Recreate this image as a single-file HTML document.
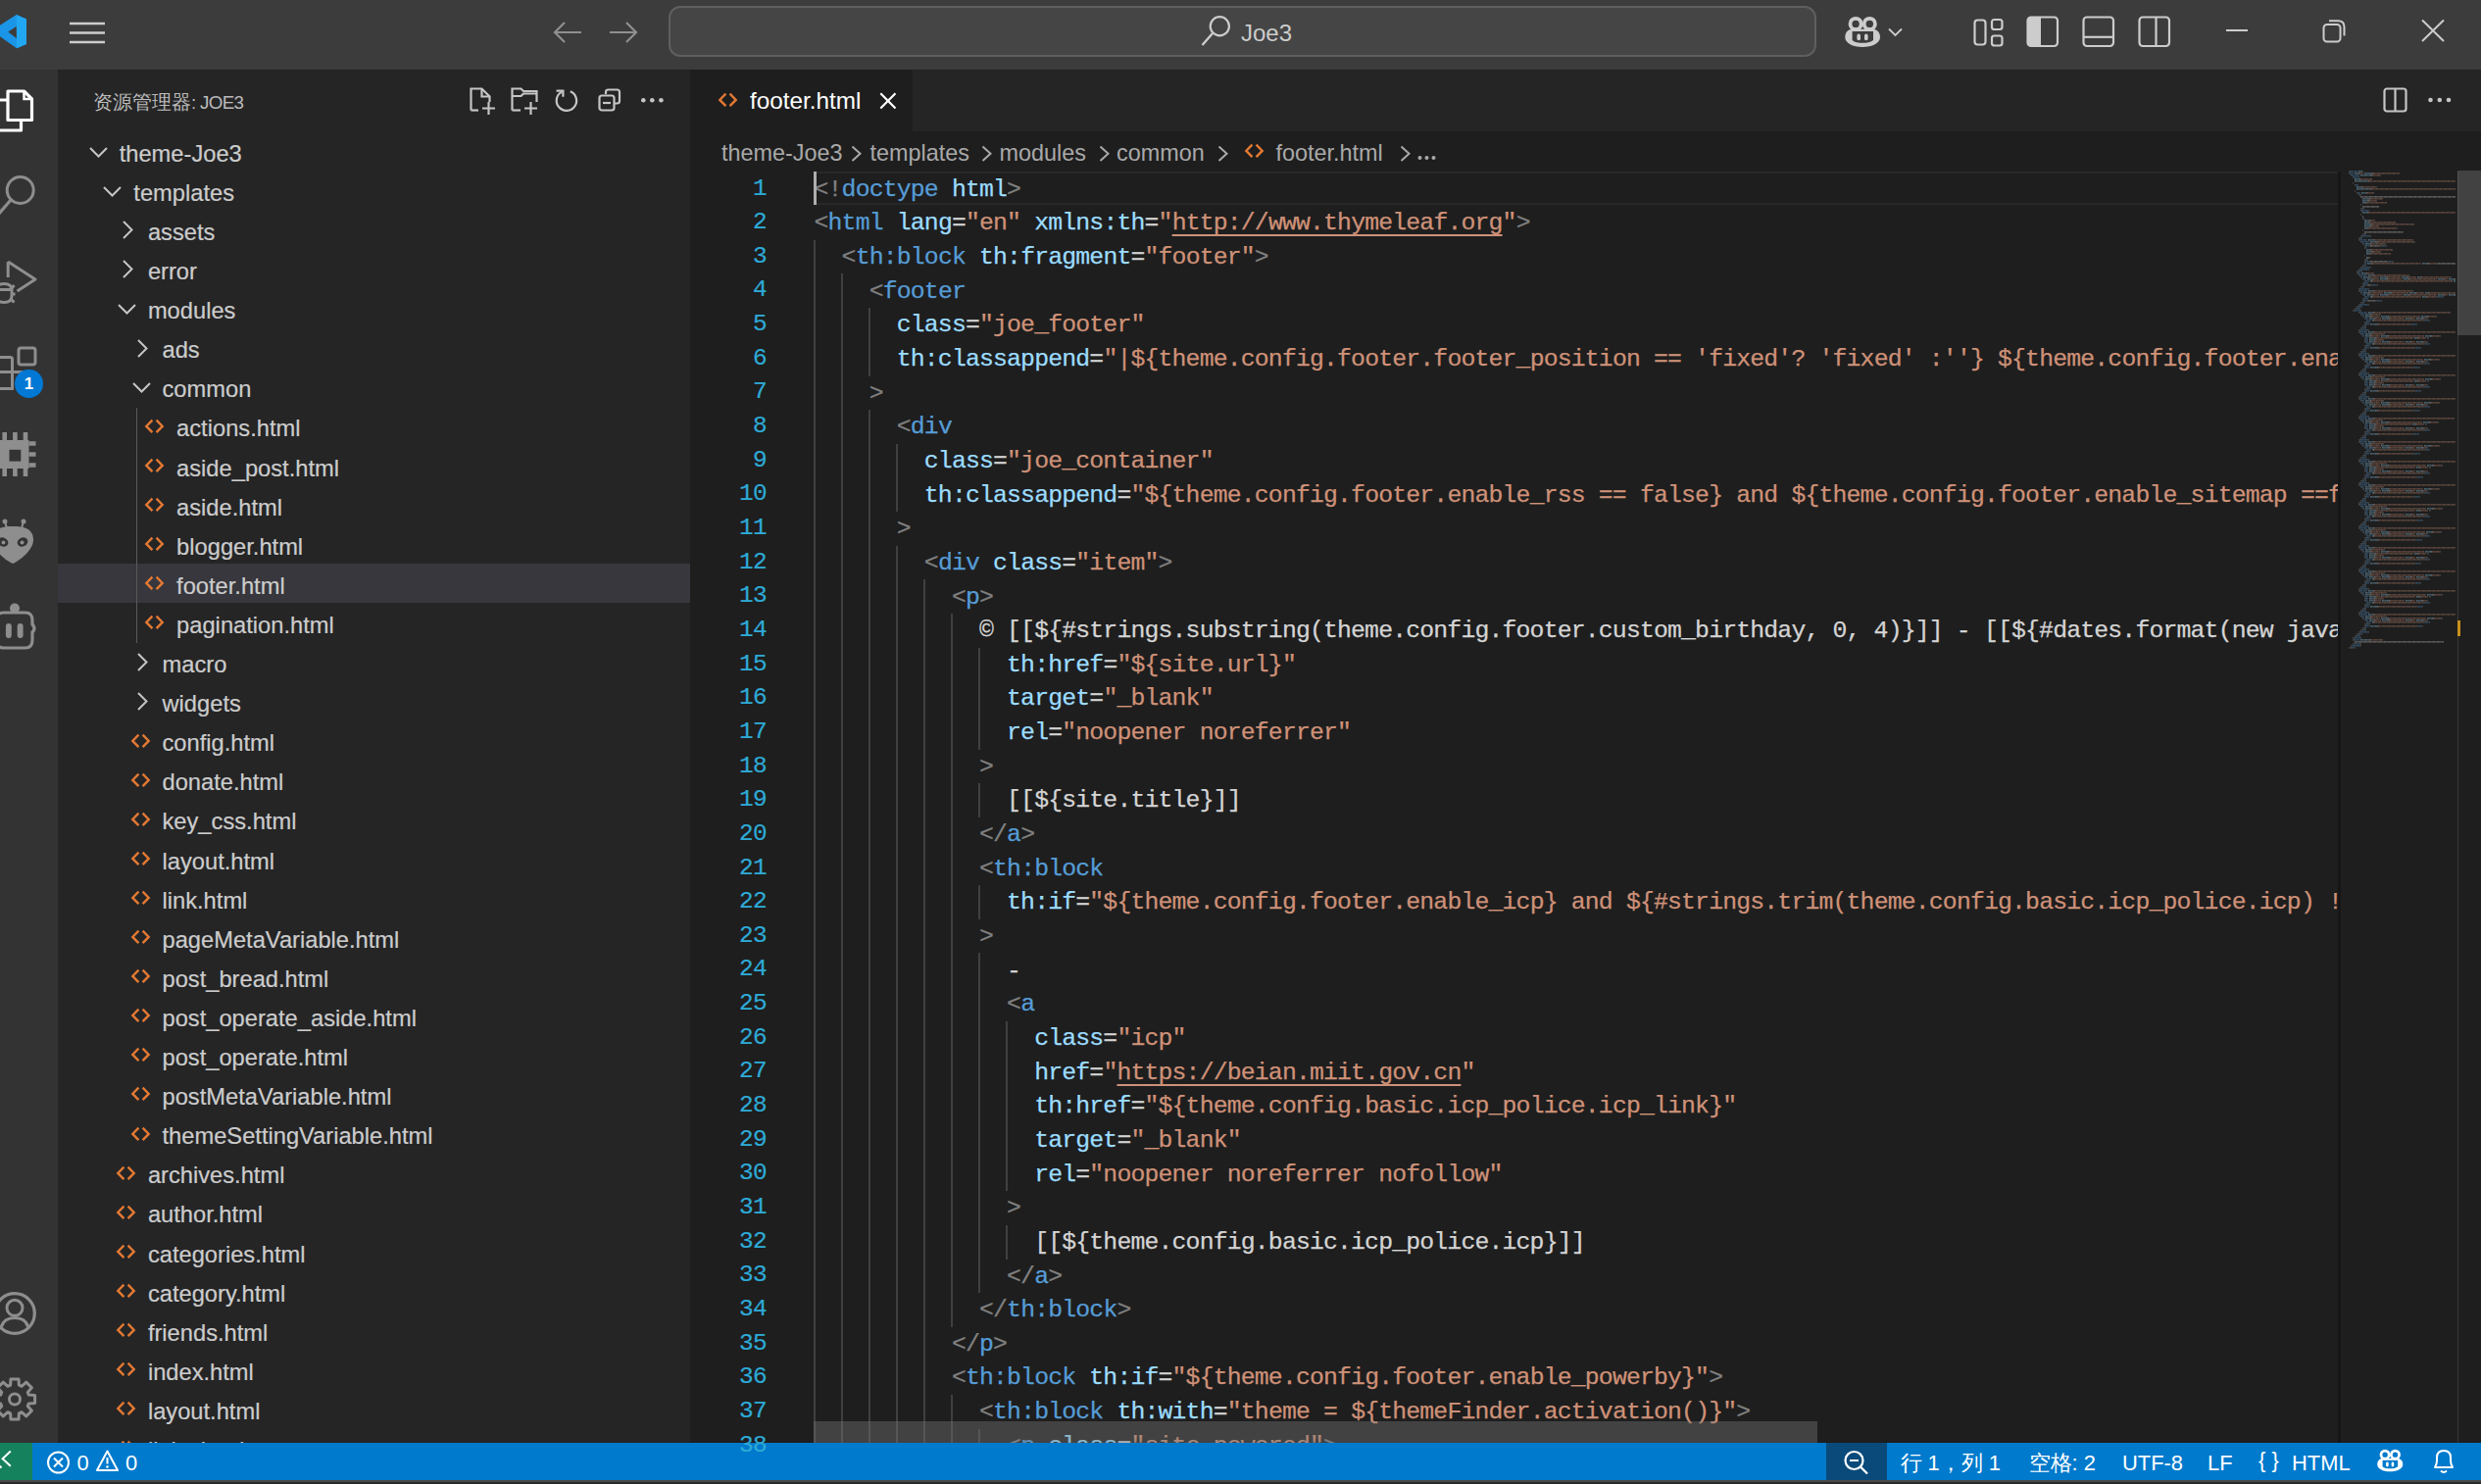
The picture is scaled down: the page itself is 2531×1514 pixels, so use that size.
<!DOCTYPE html><html><head><meta charset="utf-8"><style>*{box-sizing:border-box;margin:0;padding:0}
html,body{width:2531px;height:1514px;overflow:hidden;background:#1e1e1e;font-family:"Liberation Sans",sans-serif}
.a{position:absolute}
.t{position:absolute;white-space:pre;line-height:1}
.code{position:absolute;left:-0.5px;white-space:pre;font-family:"Liberation Mono",monospace;font-size:24.8px;letter-spacing:-0.84px;line-height:34.65px;height:34.65px;-webkit-text-stroke:0.25px currentColor}
.ln{position:absolute;font-family:"Liberation Mono",monospace;font-size:24.4px;letter-spacing:-0.6px;-webkit-text-stroke:0.2px currentColor;line-height:34.65px;color:#2eaad6;text-align:right;width:120px;left:662px}
.row{position:absolute;left:59px;width:645px;height:40.1px}
.rt{position:absolute;top:0;line-height:40.1px;font-size:23.7px;color:#cccccc;white-space:pre;-webkit-text-stroke:0.2px currentColor}
.ig{position:absolute;width:2px;background:#404040}
svg{position:absolute;overflow:visible}
</style></head><body>
<div class="a" style="left:0;top:0;width:2531px;height:71px;background:#3c3c3c"></div>
<div class="a" style="left:0;top:71px;width:59px;height:1401px;background:#333333"></div>
<div class="a" style="left:59px;top:71px;width:645px;height:1401px;background:#252526"></div>
<div class="a" style="left:704px;top:71px;width:1827px;height:63px;background:#252526"></div>
<div class="a" style="left:704px;top:71px;width:227px;height:63px;background:#1e1e1e"></div>
<div class="a" style="left:0;top:1472px;width:2531px;height:38px;background:#007acc"></div>
<div class="a" style="left:0;top:1510px;width:2531px;height:4px;background:#2a2a2a;border-top:2px solid #4a4a4a"></div>
<svg style="left:0px;top:0px" width="30" height="60" viewBox="0 0 30 60"><path fill-rule="evenodd" d="M16.7 15 L27 19.5 L27 45 L17 49.3 L0 37.3 L0 25.8 Z M17.4 26.5 L8.2 32.4 L17.4 39.5 Z" fill="#1b95e8"/><path d="M16.7 15 L27 19.5 L27 45 L17 49.3 Z" fill="#22a7f2"/></svg>
<svg style="left:71px;top:22px" width="37" height="24" viewBox="0 0 37 24"><path d="M0 2 H36 M0 11.5 H36 M0 21 H36" stroke="#cccccc" stroke-width="2.6"/></svg>
<svg style="left:563px;top:21px" width="32" height="24" viewBox="0 0 32 24"><path d="M30 12 H3 M13 2 L3 12 L13 22" fill="none" stroke="#8f8f8f" stroke-width="2.2"/></svg>
<svg style="left:621px;top:21px" width="32" height="24" viewBox="0 0 32 24"><path d="M1 12 H28 M18 2 L28 12 L18 22" fill="none" stroke="#8f8f8f" stroke-width="2.2"/></svg>
<div class="a" style="left:682px;top:6px;width:1171px;height:52px;background:#454545;border:2px solid #5f5f5f;border-radius:12px"></div>
<svg style="left:1224px;top:14px" width="34" height="36" viewBox="0 0 34 36"><circle cx="20.3" cy="12.8" r="9.6" fill="none" stroke="#cccccc" stroke-width="2.2"/><path d="M13 20 L2.5 32" stroke="#cccccc" stroke-width="2.4"/></svg>
<div class="t" style="left:1266px;top:22px;font-size:24px;color:#cccccc">Joe3</div>
<svg style="left:1882px;top:16px" width="38" height="34" viewBox="0 0 38 34"><g transform="scale(1.0)"><path d="M0.3 22 C0.3 16 4 13.7 8 13.7 H28 C32 13.7 36 16 36 22 C36 28 28 32 18 32 C8 32 0.3 28 0.3 22 Z" fill="#cccccc"/><path d="M7.6 16.1 H29 V25 C26 27.6 22 27.8 18.3 27.8 C14 27.8 10 27.4 7.6 25 Z" fill="#3c3c3c"/><circle cx="11.1" cy="8.4" r="5.6" fill="#3c3c3c" stroke="#cccccc" stroke-width="3.8"/><circle cx="25.3" cy="8.4" r="5.6" fill="#3c3c3c" stroke="#cccccc" stroke-width="3.8"/><rect x="12.4" y="18.6" width="3.6" height="6.6" rx="1.8" fill="#cccccc"/><rect x="20" y="18.6" width="3.6" height="6.6" rx="1.8" fill="#cccccc"/></g></svg>
<svg style="left:1926px;top:28px" width="16" height="10" viewBox="0 0 16 10"><path d="M1 1.5 L7.5 8 L14 1.5" fill="none" stroke="#cccccc" stroke-width="1.8"/></svg>
<svg style="left:2012px;top:18px" width="33" height="30" viewBox="0 0 33 30"><rect x="2.5" y="2.5" width="11" height="25" rx="3" fill="none" stroke="#cccccc" stroke-width="2.2"/><rect x="20" y="2" width="10.5" height="10" rx="2.5" fill="none" stroke="#cccccc" stroke-width="2.2"/><rect x="20" y="18.5" width="10.5" height="10" rx="2.5" fill="none" stroke="#cccccc" stroke-width="2.2"/></svg>
<svg style="left:2067px;top:16px" width="34" height="33" viewBox="0 0 34 33"><rect x="1.5" y="1.5" width="30.5" height="29.5" rx="3.5" fill="none" stroke="#cccccc" stroke-width="2.2"/><path d="M1.5 5 Q1.5 1.5 5 1.5 H15 V31 H5 Q1.5 31 1.5 27.5 Z" fill="#cccccc"/></svg>
<svg style="left:2124px;top:16px" width="34" height="33" viewBox="0 0 34 33"><rect x="1.5" y="1.5" width="30.5" height="29.5" rx="3.5" fill="none" stroke="#cccccc" stroke-width="2.2"/><path d="M1.5 21.8 H32" stroke="#cccccc" stroke-width="2.2"/></svg>
<svg style="left:2181px;top:16px" width="34" height="33" viewBox="0 0 34 33"><rect x="1.5" y="1.5" width="30.5" height="29.5" rx="3.5" fill="none" stroke="#cccccc" stroke-width="2.2"/><path d="M18.5 1.5 V31" stroke="#cccccc" stroke-width="2.2"/></svg>
<svg style="left:2270px;top:29px" width="25" height="4" viewBox="0 0 25 4"><path d="M1 2 H23" stroke="#cccccc" stroke-width="2"/></svg>
<svg style="left:2368px;top:19px" width="27" height="26" viewBox="0 0 27 26"><rect x="2.5" y="6" width="17" height="17.5" rx="3.5" fill="none" stroke="#cccccc" stroke-width="2"/><path d="M8 2.2 H17 Q23.5 2.2 23.5 8.5 V17.5" fill="none" stroke="#cccccc" stroke-width="2"/></svg>
<svg style="left:2469px;top:19px" width="27" height="25" viewBox="0 0 27 25"><path d="M2 1.5 L24 23 M24 1.5 L2 23" stroke="#cccccc" stroke-width="2"/></svg>
<svg style="left:0px;top:88px" width="40" height="50" viewBox="0 0 40 50"><path d="M8 5 H24.5 L32.5 13 V34.5 H8 Z" fill="none" stroke="#ffffff" stroke-width="3.2" stroke-linejoin="round"/><path d="M24.5 5 V13 H32.5" fill="none" stroke="#ffffff" stroke-width="2.5"/><path d="M8 14 H-4 V45 H21.5 V34.5" fill="none" stroke="#ffffff" stroke-width="3.2" stroke-linejoin="round"/></svg>
<svg style="left:0px;top:176px" width="40" height="50" viewBox="0 0 40 50"><circle cx="20.7" cy="18" r="13.5" fill="none" stroke="#8e8e8e" stroke-width="3"/><path d="M11 28 L-2 43" stroke="#8e8e8e" stroke-width="3.2"/></svg>
<svg style="left:0px;top:262px" width="40" height="52" viewBox="0 0 40 52"><path d="M8.2 5 L36 23 L17.5 35" fill="none" stroke="#8e8e8e" stroke-width="3" stroke-linejoin="round"/><path d="M8.2 5 V21" stroke="#8e8e8e" stroke-width="3"/><path d="M-4 34 Q-4 27.5 4 27.5 Q12 27.5 12 34 V40 Q12 46.5 4 46.5 Q-4 46.5 -4 40 Z" fill="none" stroke="#8e8e8e" stroke-width="3"/><path d="M-4 33.5 H12 M12 32 L14.5 29 M12 38 H15.5 M11.5 43.5 L14.5 46.5" stroke="#8e8e8e" stroke-width="3"/></svg>
<svg style="left:0px;top:352px" width="40" height="50" viewBox="0 0 40 50"><rect x="19" y="3" width="17" height="17" rx="2.5" fill="none" stroke="#8e8e8e" stroke-width="3"/><path d="M-5 12.5 H10.5 Q12.5 12.5 12.5 14.5 V44.5 H-5 M-5 27.5 H28" fill="none" stroke="#8e8e8e" stroke-width="3"/></svg>
<div class="a" style="left:15.3px;top:377.2px;width:28.4px;height:28.4px;border-radius:50%;background:#0078d4;border:0"></div>
<div class="t" style="left:15.3px;top:383px;width:28.4px;text-align:center;font-size:17px;font-weight:bold;color:#ffffff">1</div>
<svg style="left:0px;top:440px" width="40" height="48" viewBox="0 0 40 48"><path d="M-8 9 H29.5 V38 H-8 Z" fill="#8e8e8e"/><rect x="9.5" y="18.8" width="11.8" height="11.8" fill="#333333"/><path d="M4.7 1 V9 M15.4 1 V9 M26 1 V9 M4.7 38 V46 M15.4 38 V46 M26 38 V46 M29.5 12.5 H36.5 M29.5 23.5 H36.5 M29.5 34.5 H36.5" stroke="#8e8e8e" stroke-width="4.6"/></svg>
<svg style="left:0px;top:529px" width="40" height="48" viewBox="0 0 40 48"><path d="M-8 22 C-8 10 2 8 13 8 C24 8 34 10 34 22 C34 31 22 42 13 46 C4 42 -8 31 -8 22 Z" fill="#8e8e8e"/><ellipse cx="3" cy="24" rx="5.5" ry="4.5" fill="#333333" transform="rotate(25 3 24)"/><ellipse cx="23" cy="24" rx="5.5" ry="4.5" fill="#333333" transform="rotate(-25 23 24)"/><circle cx="3.5" cy="24.5" r="2" fill="#8e8e8e"/><circle cx="22.5" cy="24.5" r="2" fill="#8e8e8e"/><path d="M5 3 L7 10 M24 3 L22 10" stroke="#8e8e8e" stroke-width="2"/><circle cx="5" cy="3" r="2.5" fill="#8e8e8e"/><circle cx="24" cy="3" r="2.5" fill="#8e8e8e"/></svg>
<svg style="left:0px;top:615px" width="40" height="50" viewBox="0 0 40 50"><circle cx="15" cy="5.5" r="5" fill="#8e8e8e"/><path d="M-4 18 Q-4 10 4 10 H26 Q33 10 33 18 V22 Q37 26 33 30 V38 Q33 46 26 46 H4 Q-4 46 -4 38 Z" fill="none" stroke="#8e8e8e" stroke-width="3.2"/><rect x="5.9" y="21" width="5.9" height="15" rx="2.9" fill="#8e8e8e"/><rect x="17.7" y="21" width="5.9" height="15" rx="2.9" fill="#8e8e8e"/></svg>
<svg style="left:0px;top:1316px" width="40" height="48" viewBox="0 0 40 48"><circle cx="15" cy="24" r="20.3" fill="none" stroke="#8e8e8e" stroke-width="3.2"/><circle cx="15" cy="18.3" r="8" fill="none" stroke="#8e8e8e" stroke-width="3"/><path d="M1.5 37.5 Q4 28.5 15 28.5 Q26 28.5 28.5 37.5" fill="none" stroke="#8e8e8e" stroke-width="3"/></svg>
<svg style="left:0px;top:1404px" width="40" height="48" viewBox="0 0 40 48"><path d="M35.61 19.49 L35.61 27.51 L29.34 27.89 L28.24 30.54 L32.41 35.24 L26.74 40.91 L22.04 36.74 L19.39 37.84 L19.01 44.11 L10.99 44.11 L10.61 37.84 L7.96 36.74 L3.26 40.91 L-2.41 35.24 L1.76 30.54 L0.66 27.89 L-5.61 27.51 L-5.61 19.49 L0.66 19.11 L1.76 16.46 L-2.41 11.76 L3.26 6.09 L7.96 10.26 L10.61 9.16 L10.99 2.89 L19.01 2.89 L19.39 9.16 L22.04 10.26 L26.74 6.09 L32.41 11.76 L28.24 16.46 L29.34 19.11 Z" fill="none" stroke="#8e8e8e" stroke-width="3" stroke-linejoin="round"/><circle cx="15" cy="23.5" r="5.5" fill="none" stroke="#8e8e8e" stroke-width="3"/></svg>
<svg style="left:476px;top:88px" width="34" height="32" viewBox="0 0 34 32"><path d="M4.5 24.5 V2.5 H15.5 L23.5 10.5 V16" fill="none" stroke="#c5c5c5" stroke-width="2.2"/><path d="M15.5 2.5 V10.5 H23.5" fill="none" stroke="#c5c5c5" stroke-width="2.2"/><path d="M4.5 24.5 H12" stroke="#c5c5c5" stroke-width="2.2"/><path d="M22.5 16 V29 M16 22.5 H29" stroke="#c5c5c5" stroke-width="2.2"/></svg>
<svg style="left:519px;top:88px" width="34" height="32" viewBox="0 0 34 32"><path d="M3.5 24.5 V2.5 H12.5 L15 5 H28.5 V16" fill="none" stroke="#c5c5c5" stroke-width="2.2"/><path d="M3.5 10 H12.5 L15 7.5 H28.5" fill="none" stroke="#c5c5c5" stroke-width="2.2"/><path d="M3.5 24.5 H12" stroke="#c5c5c5" stroke-width="2.2"/><path d="M22.5 16 V29 M16 22.5 H29" stroke="#c5c5c5" stroke-width="2.2"/></svg>
<svg style="left:564px;top:88px" width="30" height="30" viewBox="0 0 30 30"><path d="M9.2 5.6 A10.2 10.2 0 1 0 17.8 5.2" fill="none" stroke="#c5c5c5" stroke-width="2.2"/><path d="M3.6 4.6 H10.4 V10.8" fill="none" stroke="#c5c5c5" stroke-width="2.2"/></svg>
<svg style="left:608px;top:88px" width="30" height="30" viewBox="0 0 30 30"><path d="M10 8 V6 Q10 3.5 12.5 3.5 H21.5 Q24 3.5 24 6 V15 Q24 17.5 21.5 17.5 H19" fill="none" stroke="#c5c5c5" stroke-width="2.2"/><rect x="3.5" y="9.5" width="15" height="15" rx="2.5" fill="none" stroke="#c5c5c5" stroke-width="2.2"/><path d="M7 17 H15" stroke="#c5c5c5" stroke-width="2.2"/></svg>
<svg style="left:652px;top:98px" width="26" height="8" viewBox="0 0 26 8"><circle cx="4.3" cy="4.2" r="2.3" fill="#c5c5c5"/><circle cx="13.3" cy="4.2" r="2.3" fill="#c5c5c5"/><circle cx="22.4" cy="4.2" r="2.3" fill="#c5c5c5"/></svg>
<svg style="left:731.5px;top:93.5px" width="20" height="15"><path d="M8.4 1.7 L2.3 7.9 L8.4 14.2 M12.6 1.7 L18.7 7.9 L12.6 14.2" fill="none" stroke="#e37933" stroke-width="2.4"/></svg>
<div class="t" style="left:765px;top:91px;font-size:24.3px;color:#ffffff">footer.html</div>
<svg style="left:896.5px;top:93.5px" width="19" height="19" viewBox="0 0 19 19"><path d="M1.3 1.3 L16.5 16.5 M16.5 1.3 L1.3 16.5" stroke="#ffffff" stroke-width="2.2"/></svg>
<svg style="left:2430px;top:88px" width="28" height="28" viewBox="0 0 28 28"><rect x="2.5" y="2.5" width="22" height="23" rx="2.5" fill="none" stroke="#c5c5c5" stroke-width="2.2"/><path d="M13.5 2.5 V25.5" stroke="#c5c5c5" stroke-width="2.2"/></svg>
<svg style="left:2476px;top:98px" width="28" height="8" viewBox="0 0 28 8"><circle cx="3.5" cy="4" r="2.3" fill="#c5c5c5"/><circle cx="12.8" cy="4" r="2.3" fill="#c5c5c5"/><circle cx="22" cy="4" r="2.3" fill="#c5c5c5"/></svg>
<div class="t" style="left:736px;top:145px;font-size:23.4px;color:#a9a9a9">theme-Joe3</div>
<div class="t" style="left:887.5px;top:145px;font-size:23.4px;color:#a9a9a9">templates</div>
<div class="t" style="left:1019.5px;top:145px;font-size:23.4px;color:#a9a9a9">modules</div>
<div class="t" style="left:1139px;top:145px;font-size:23.4px;color:#a9a9a9">common</div>
<div class="t" style="left:1301.5px;top:145px;font-size:23.4px;color:#a9a9a9">footer.html</div>
<svg style="left:868px;top:147.5px" width="12" height="18" viewBox="0 0 12 18"><path d="M1.5 1.5 L9.5 8.7 L1.5 15.9" fill="none" stroke="#a9a9a9" stroke-width="2"/></svg>
<svg style="left:1001px;top:147.5px" width="12" height="18" viewBox="0 0 12 18"><path d="M1.5 1.5 L9.5 8.7 L1.5 15.9" fill="none" stroke="#a9a9a9" stroke-width="2"/></svg>
<svg style="left:1120.5px;top:147.5px" width="12" height="18" viewBox="0 0 12 18"><path d="M1.5 1.5 L9.5 8.7 L1.5 15.9" fill="none" stroke="#a9a9a9" stroke-width="2"/></svg>
<svg style="left:1241.5px;top:147.5px" width="12" height="18" viewBox="0 0 12 18"><path d="M1.5 1.5 L9.5 8.7 L1.5 15.9" fill="none" stroke="#a9a9a9" stroke-width="2"/></svg>
<svg style="left:1428px;top:147.5px" width="12" height="18" viewBox="0 0 12 18"><path d="M1.5 1.5 L9.5 8.7 L1.5 15.9" fill="none" stroke="#a9a9a9" stroke-width="2"/></svg>
<svg style="left:1269.0px;top:146.0px" width="20" height="15"><path d="M8.4 1.7 L2.3 7.9 L8.4 14.2 M12.6 1.7 L18.7 7.9 L12.6 14.2" fill="none" stroke="#e37933" stroke-width="2.4"/></svg>
<svg style="left:1446px;top:158px" width="20" height="6" viewBox="0 0 20 6"><circle cx="2.5" cy="3" r="2" fill="#a9a9a9"/><circle cx="9.5" cy="3" r="2" fill="#a9a9a9"/><circle cx="16.5" cy="3" r="2" fill="#a9a9a9"/></svg>
<div class="a" style="left:59px;top:134px;width:645px;height:1338px;overflow:hidden">
<div class="a" style="left:0;top:0.00px;width:645px;height:40.1px;">
<svg style="left:31.7px;top:15.5px" width="19" height="10"><path d="M1 1 L9.5 9.5 L18 1" fill="none" stroke="#c5c5c5" stroke-width="2"/></svg>
<div class="rt" style="left:62.7px;top:2.8px">theme-Joe3</div>
</div>
<div class="a" style="left:0;top:40.10px;width:645px;height:40.1px;">
<svg style="left:46.3px;top:15.5px" width="19" height="10"><path d="M1 1 L9.5 9.5 L18 1" fill="none" stroke="#c5c5c5" stroke-width="2"/></svg>
<div class="rt" style="left:77.3px;top:2.8px">templates</div>
</div>
<div class="a" style="left:0;top:80.20px;width:645px;height:40.1px;">
<svg style="left:66.4px;top:11px" width="10" height="19"><path d="M1 1 L9.5 9.5 L1 18" fill="none" stroke="#c5c5c5" stroke-width="2"/></svg>
<div class="rt" style="left:91.9px;top:2.8px">assets</div>
</div>
<div class="a" style="left:0;top:120.30px;width:645px;height:40.1px;">
<svg style="left:66.4px;top:11px" width="10" height="19"><path d="M1 1 L9.5 9.5 L1 18" fill="none" stroke="#c5c5c5" stroke-width="2"/></svg>
<div class="rt" style="left:91.9px;top:2.8px">error</div>
</div>
<div class="a" style="left:0;top:160.40px;width:645px;height:40.1px;">
<svg style="left:60.9px;top:15.5px" width="19" height="10"><path d="M1 1 L9.5 9.5 L18 1" fill="none" stroke="#c5c5c5" stroke-width="2"/></svg>
<div class="rt" style="left:91.9px;top:2.8px">modules</div>
</div>
<div class="a" style="left:0;top:200.50px;width:645px;height:40.1px;">
<svg style="left:81.0px;top:11px" width="10" height="19"><path d="M1 1 L9.5 9.5 L1 18" fill="none" stroke="#c5c5c5" stroke-width="2"/></svg>
<div class="rt" style="left:106.5px;top:2.8px">ads</div>
</div>
<div class="a" style="left:0;top:240.60px;width:645px;height:40.1px;">
<svg style="left:75.5px;top:15.5px" width="19" height="10"><path d="M1 1 L9.5 9.5 L18 1" fill="none" stroke="#c5c5c5" stroke-width="2"/></svg>
<div class="rt" style="left:106.5px;top:2.8px">common</div>
</div>
<div class="a" style="left:0;top:280.70px;width:645px;height:40.1px;">
<svg style="left:88.1px;top:12.0px" width="20" height="15"><path d="M8.4 1.7 L2.3 7.9 L8.4 14.2 M12.6 1.7 L18.7 7.9 L12.6 14.2" fill="none" stroke="#e37933" stroke-width="2.4"/></svg>
<div class="rt" style="left:121.1px;top:2.8px">actions.html</div>
</div>
<div class="a" style="left:0;top:320.80px;width:645px;height:40.1px;">
<svg style="left:88.1px;top:12.0px" width="20" height="15"><path d="M8.4 1.7 L2.3 7.9 L8.4 14.2 M12.6 1.7 L18.7 7.9 L12.6 14.2" fill="none" stroke="#e37933" stroke-width="2.4"/></svg>
<div class="rt" style="left:121.1px;top:2.8px">aside_post.html</div>
</div>
<div class="a" style="left:0;top:360.90px;width:645px;height:40.1px;">
<svg style="left:88.1px;top:12.0px" width="20" height="15"><path d="M8.4 1.7 L2.3 7.9 L8.4 14.2 M12.6 1.7 L18.7 7.9 L12.6 14.2" fill="none" stroke="#e37933" stroke-width="2.4"/></svg>
<div class="rt" style="left:121.1px;top:2.8px">aside.html</div>
</div>
<div class="a" style="left:0;top:401.00px;width:645px;height:40.1px;">
<svg style="left:88.1px;top:12.0px" width="20" height="15"><path d="M8.4 1.7 L2.3 7.9 L8.4 14.2 M12.6 1.7 L18.7 7.9 L12.6 14.2" fill="none" stroke="#e37933" stroke-width="2.4"/></svg>
<div class="rt" style="left:121.1px;top:2.8px">blogger.html</div>
</div>
<div class="a" style="left:0;top:441.10px;width:645px;height:40.1px;background:#37373d;">
<svg style="left:88.1px;top:12.0px" width="20" height="15"><path d="M8.4 1.7 L2.3 7.9 L8.4 14.2 M12.6 1.7 L18.7 7.9 L12.6 14.2" fill="none" stroke="#e37933" stroke-width="2.4"/></svg>
<div class="rt" style="left:121.1px;top:2.8px">footer.html</div>
</div>
<div class="a" style="left:0;top:481.20px;width:645px;height:40.1px;">
<svg style="left:88.1px;top:12.0px" width="20" height="15"><path d="M8.4 1.7 L2.3 7.9 L8.4 14.2 M12.6 1.7 L18.7 7.9 L12.6 14.2" fill="none" stroke="#e37933" stroke-width="2.4"/></svg>
<div class="rt" style="left:121.1px;top:2.8px">pagination.html</div>
</div>
<div class="a" style="left:0;top:521.30px;width:645px;height:40.1px;">
<svg style="left:81.0px;top:11px" width="10" height="19"><path d="M1 1 L9.5 9.5 L1 18" fill="none" stroke="#c5c5c5" stroke-width="2"/></svg>
<div class="rt" style="left:106.5px;top:2.8px">macro</div>
</div>
<div class="a" style="left:0;top:561.40px;width:645px;height:40.1px;">
<svg style="left:81.0px;top:11px" width="10" height="19"><path d="M1 1 L9.5 9.5 L1 18" fill="none" stroke="#c5c5c5" stroke-width="2"/></svg>
<div class="rt" style="left:106.5px;top:2.8px">widgets</div>
</div>
<div class="a" style="left:0;top:601.50px;width:645px;height:40.1px;">
<svg style="left:73.5px;top:12.0px" width="20" height="15"><path d="M8.4 1.7 L2.3 7.9 L8.4 14.2 M12.6 1.7 L18.7 7.9 L12.6 14.2" fill="none" stroke="#e37933" stroke-width="2.4"/></svg>
<div class="rt" style="left:106.5px;top:2.8px">config.html</div>
</div>
<div class="a" style="left:0;top:641.60px;width:645px;height:40.1px;">
<svg style="left:73.5px;top:12.0px" width="20" height="15"><path d="M8.4 1.7 L2.3 7.9 L8.4 14.2 M12.6 1.7 L18.7 7.9 L12.6 14.2" fill="none" stroke="#e37933" stroke-width="2.4"/></svg>
<div class="rt" style="left:106.5px;top:2.8px">donate.html</div>
</div>
<div class="a" style="left:0;top:681.70px;width:645px;height:40.1px;">
<svg style="left:73.5px;top:12.0px" width="20" height="15"><path d="M8.4 1.7 L2.3 7.9 L8.4 14.2 M12.6 1.7 L18.7 7.9 L12.6 14.2" fill="none" stroke="#e37933" stroke-width="2.4"/></svg>
<div class="rt" style="left:106.5px;top:2.8px">key_css.html</div>
</div>
<div class="a" style="left:0;top:721.80px;width:645px;height:40.1px;">
<svg style="left:73.5px;top:12.0px" width="20" height="15"><path d="M8.4 1.7 L2.3 7.9 L8.4 14.2 M12.6 1.7 L18.7 7.9 L12.6 14.2" fill="none" stroke="#e37933" stroke-width="2.4"/></svg>
<div class="rt" style="left:106.5px;top:2.8px">layout.html</div>
</div>
<div class="a" style="left:0;top:761.90px;width:645px;height:40.1px;">
<svg style="left:73.5px;top:12.0px" width="20" height="15"><path d="M8.4 1.7 L2.3 7.9 L8.4 14.2 M12.6 1.7 L18.7 7.9 L12.6 14.2" fill="none" stroke="#e37933" stroke-width="2.4"/></svg>
<div class="rt" style="left:106.5px;top:2.8px">link.html</div>
</div>
<div class="a" style="left:0;top:802.00px;width:645px;height:40.1px;">
<svg style="left:73.5px;top:12.0px" width="20" height="15"><path d="M8.4 1.7 L2.3 7.9 L8.4 14.2 M12.6 1.7 L18.7 7.9 L12.6 14.2" fill="none" stroke="#e37933" stroke-width="2.4"/></svg>
<div class="rt" style="left:106.5px;top:2.8px">pageMetaVariable.html</div>
</div>
<div class="a" style="left:0;top:842.10px;width:645px;height:40.1px;">
<svg style="left:73.5px;top:12.0px" width="20" height="15"><path d="M8.4 1.7 L2.3 7.9 L8.4 14.2 M12.6 1.7 L18.7 7.9 L12.6 14.2" fill="none" stroke="#e37933" stroke-width="2.4"/></svg>
<div class="rt" style="left:106.5px;top:2.8px">post_bread.html</div>
</div>
<div class="a" style="left:0;top:882.20px;width:645px;height:40.1px;">
<svg style="left:73.5px;top:12.0px" width="20" height="15"><path d="M8.4 1.7 L2.3 7.9 L8.4 14.2 M12.6 1.7 L18.7 7.9 L12.6 14.2" fill="none" stroke="#e37933" stroke-width="2.4"/></svg>
<div class="rt" style="left:106.5px;top:2.8px">post_operate_aside.html</div>
</div>
<div class="a" style="left:0;top:922.30px;width:645px;height:40.1px;">
<svg style="left:73.5px;top:12.0px" width="20" height="15"><path d="M8.4 1.7 L2.3 7.9 L8.4 14.2 M12.6 1.7 L18.7 7.9 L12.6 14.2" fill="none" stroke="#e37933" stroke-width="2.4"/></svg>
<div class="rt" style="left:106.5px;top:2.8px">post_operate.html</div>
</div>
<div class="a" style="left:0;top:962.40px;width:645px;height:40.1px;">
<svg style="left:73.5px;top:12.0px" width="20" height="15"><path d="M8.4 1.7 L2.3 7.9 L8.4 14.2 M12.6 1.7 L18.7 7.9 L12.6 14.2" fill="none" stroke="#e37933" stroke-width="2.4"/></svg>
<div class="rt" style="left:106.5px;top:2.8px">postMetaVariable.html</div>
</div>
<div class="a" style="left:0;top:1002.50px;width:645px;height:40.1px;">
<svg style="left:73.5px;top:12.0px" width="20" height="15"><path d="M8.4 1.7 L2.3 7.9 L8.4 14.2 M12.6 1.7 L18.7 7.9 L12.6 14.2" fill="none" stroke="#e37933" stroke-width="2.4"/></svg>
<div class="rt" style="left:106.5px;top:2.8px">themeSettingVariable.html</div>
</div>
<div class="a" style="left:0;top:1042.60px;width:645px;height:40.1px;">
<svg style="left:58.9px;top:12.0px" width="20" height="15"><path d="M8.4 1.7 L2.3 7.9 L8.4 14.2 M12.6 1.7 L18.7 7.9 L12.6 14.2" fill="none" stroke="#e37933" stroke-width="2.4"/></svg>
<div class="rt" style="left:91.9px;top:2.8px">archives.html</div>
</div>
<div class="a" style="left:0;top:1082.70px;width:645px;height:40.1px;">
<svg style="left:58.9px;top:12.0px" width="20" height="15"><path d="M8.4 1.7 L2.3 7.9 L8.4 14.2 M12.6 1.7 L18.7 7.9 L12.6 14.2" fill="none" stroke="#e37933" stroke-width="2.4"/></svg>
<div class="rt" style="left:91.9px;top:2.8px">author.html</div>
</div>
<div class="a" style="left:0;top:1122.80px;width:645px;height:40.1px;">
<svg style="left:58.9px;top:12.0px" width="20" height="15"><path d="M8.4 1.7 L2.3 7.9 L8.4 14.2 M12.6 1.7 L18.7 7.9 L12.6 14.2" fill="none" stroke="#e37933" stroke-width="2.4"/></svg>
<div class="rt" style="left:91.9px;top:2.8px">categories.html</div>
</div>
<div class="a" style="left:0;top:1162.90px;width:645px;height:40.1px;">
<svg style="left:58.9px;top:12.0px" width="20" height="15"><path d="M8.4 1.7 L2.3 7.9 L8.4 14.2 M12.6 1.7 L18.7 7.9 L12.6 14.2" fill="none" stroke="#e37933" stroke-width="2.4"/></svg>
<div class="rt" style="left:91.9px;top:2.8px">category.html</div>
</div>
<div class="a" style="left:0;top:1203.00px;width:645px;height:40.1px;">
<svg style="left:58.9px;top:12.0px" width="20" height="15"><path d="M8.4 1.7 L2.3 7.9 L8.4 14.2 M12.6 1.7 L18.7 7.9 L12.6 14.2" fill="none" stroke="#e37933" stroke-width="2.4"/></svg>
<div class="rt" style="left:91.9px;top:2.8px">friends.html</div>
</div>
<div class="a" style="left:0;top:1243.10px;width:645px;height:40.1px;">
<svg style="left:58.9px;top:12.0px" width="20" height="15"><path d="M8.4 1.7 L2.3 7.9 L8.4 14.2 M12.6 1.7 L18.7 7.9 L12.6 14.2" fill="none" stroke="#e37933" stroke-width="2.4"/></svg>
<div class="rt" style="left:91.9px;top:2.8px">index.html</div>
</div>
<div class="a" style="left:0;top:1283.20px;width:645px;height:40.1px;">
<svg style="left:58.9px;top:12.0px" width="20" height="15"><path d="M8.4 1.7 L2.3 7.9 L8.4 14.2 M12.6 1.7 L18.7 7.9 L12.6 14.2" fill="none" stroke="#e37933" stroke-width="2.4"/></svg>
<div class="rt" style="left:91.9px;top:2.8px">layout.html</div>
</div>
<div class="a" style="left:0;top:1323.30px;width:645px;height:40.1px;">
<svg style="left:58.9px;top:12.0px" width="20" height="15"><path d="M8.4 1.7 L2.3 7.9 L8.4 14.2 M12.6 1.7 L18.7 7.9 L12.6 14.2" fill="none" stroke="#e37933" stroke-width="2.4"/></svg>
<div class="rt" style="left:91.9px;top:2.8px">links.html</div>
</div>
<div class="a" style="left:79.5px;top:281.5px;width:1.6px;height:240px;background:#585858"></div>
</div>
<div class="t" style="left:95px;top:93.5px;font-size:20.4px;color:#bbbbbb">资源管理器<span style="font-size:18.8px;letter-spacing:-0.7px">: JOE3</span></div>
<div class="a" style="left:831px;top:174.8px;width:1557px;height:34.65px;border:2px solid #282828"></div>
<div class="a" style="left:0;top:0;width:2531px;height:1472px;overflow:hidden">
<div class="ig" style="left:829.7px;top:244.80px;height:34.95px"></div>
<div class="ig" style="left:829.7px;top:279.45px;height:34.95px"></div>
<div class="ig" style="left:857.8px;top:279.45px;height:34.95px"></div>
<div class="ig" style="left:829.7px;top:314.10px;height:34.95px"></div>
<div class="ig" style="left:857.8px;top:314.10px;height:34.95px"></div>
<div class="ig" style="left:885.9px;top:314.10px;height:34.95px"></div>
<div class="ig" style="left:829.7px;top:348.75px;height:34.95px"></div>
<div class="ig" style="left:857.8px;top:348.75px;height:34.95px"></div>
<div class="ig" style="left:885.9px;top:348.75px;height:34.95px"></div>
<div class="ig" style="left:829.7px;top:383.40px;height:34.95px"></div>
<div class="ig" style="left:857.8px;top:383.40px;height:34.95px"></div>
<div class="ig" style="left:829.7px;top:418.05px;height:34.95px"></div>
<div class="ig" style="left:857.8px;top:418.05px;height:34.95px"></div>
<div class="ig" style="left:885.9px;top:418.05px;height:34.95px"></div>
<div class="ig" style="left:829.7px;top:452.70px;height:34.95px"></div>
<div class="ig" style="left:857.8px;top:452.70px;height:34.95px"></div>
<div class="ig" style="left:885.9px;top:452.70px;height:34.95px"></div>
<div class="ig" style="left:913.9px;top:452.70px;height:34.95px"></div>
<div class="ig" style="left:829.7px;top:487.35px;height:34.95px"></div>
<div class="ig" style="left:857.8px;top:487.35px;height:34.95px"></div>
<div class="ig" style="left:885.9px;top:487.35px;height:34.95px"></div>
<div class="ig" style="left:913.9px;top:487.35px;height:34.95px"></div>
<div class="ig" style="left:829.7px;top:522.00px;height:34.95px"></div>
<div class="ig" style="left:857.8px;top:522.00px;height:34.95px"></div>
<div class="ig" style="left:885.9px;top:522.00px;height:34.95px"></div>
<div class="ig" style="left:829.7px;top:556.65px;height:34.95px"></div>
<div class="ig" style="left:857.8px;top:556.65px;height:34.95px"></div>
<div class="ig" style="left:885.9px;top:556.65px;height:34.95px"></div>
<div class="ig" style="left:913.9px;top:556.65px;height:34.95px"></div>
<div class="ig" style="left:829.7px;top:591.30px;height:34.95px"></div>
<div class="ig" style="left:857.8px;top:591.30px;height:34.95px"></div>
<div class="ig" style="left:885.9px;top:591.30px;height:34.95px"></div>
<div class="ig" style="left:913.9px;top:591.30px;height:34.95px"></div>
<div class="ig" style="left:942.0px;top:591.30px;height:34.95px"></div>
<div class="ig" style="left:829.7px;top:625.95px;height:34.95px"></div>
<div class="ig" style="left:857.8px;top:625.95px;height:34.95px"></div>
<div class="ig" style="left:885.9px;top:625.95px;height:34.95px"></div>
<div class="ig" style="left:913.9px;top:625.95px;height:34.95px"></div>
<div class="ig" style="left:942.0px;top:625.95px;height:34.95px"></div>
<div class="ig" style="left:970.1px;top:625.95px;height:34.95px"></div>
<div class="ig" style="left:829.7px;top:660.60px;height:34.95px"></div>
<div class="ig" style="left:857.8px;top:660.60px;height:34.95px"></div>
<div class="ig" style="left:885.9px;top:660.60px;height:34.95px"></div>
<div class="ig" style="left:913.9px;top:660.60px;height:34.95px"></div>
<div class="ig" style="left:942.0px;top:660.60px;height:34.95px"></div>
<div class="ig" style="left:970.1px;top:660.60px;height:34.95px"></div>
<div class="ig" style="left:998.2px;top:660.60px;height:34.95px"></div>
<div class="ig" style="left:829.7px;top:695.25px;height:34.95px"></div>
<div class="ig" style="left:857.8px;top:695.25px;height:34.95px"></div>
<div class="ig" style="left:885.9px;top:695.25px;height:34.95px"></div>
<div class="ig" style="left:913.9px;top:695.25px;height:34.95px"></div>
<div class="ig" style="left:942.0px;top:695.25px;height:34.95px"></div>
<div class="ig" style="left:970.1px;top:695.25px;height:34.95px"></div>
<div class="ig" style="left:998.2px;top:695.25px;height:34.95px"></div>
<div class="ig" style="left:829.7px;top:729.90px;height:34.95px"></div>
<div class="ig" style="left:857.8px;top:729.90px;height:34.95px"></div>
<div class="ig" style="left:885.9px;top:729.90px;height:34.95px"></div>
<div class="ig" style="left:913.9px;top:729.90px;height:34.95px"></div>
<div class="ig" style="left:942.0px;top:729.90px;height:34.95px"></div>
<div class="ig" style="left:970.1px;top:729.90px;height:34.95px"></div>
<div class="ig" style="left:998.2px;top:729.90px;height:34.95px"></div>
<div class="ig" style="left:829.7px;top:764.55px;height:34.95px"></div>
<div class="ig" style="left:857.8px;top:764.55px;height:34.95px"></div>
<div class="ig" style="left:885.9px;top:764.55px;height:34.95px"></div>
<div class="ig" style="left:913.9px;top:764.55px;height:34.95px"></div>
<div class="ig" style="left:942.0px;top:764.55px;height:34.95px"></div>
<div class="ig" style="left:970.1px;top:764.55px;height:34.95px"></div>
<div class="ig" style="left:829.7px;top:799.20px;height:34.95px"></div>
<div class="ig" style="left:857.8px;top:799.20px;height:34.95px"></div>
<div class="ig" style="left:885.9px;top:799.20px;height:34.95px"></div>
<div class="ig" style="left:913.9px;top:799.20px;height:34.95px"></div>
<div class="ig" style="left:942.0px;top:799.20px;height:34.95px"></div>
<div class="ig" style="left:970.1px;top:799.20px;height:34.95px"></div>
<div class="ig" style="left:998.2px;top:799.20px;height:34.95px"></div>
<div class="ig" style="left:829.7px;top:833.85px;height:34.95px"></div>
<div class="ig" style="left:857.8px;top:833.85px;height:34.95px"></div>
<div class="ig" style="left:885.9px;top:833.85px;height:34.95px"></div>
<div class="ig" style="left:913.9px;top:833.85px;height:34.95px"></div>
<div class="ig" style="left:942.0px;top:833.85px;height:34.95px"></div>
<div class="ig" style="left:970.1px;top:833.85px;height:34.95px"></div>
<div class="ig" style="left:829.7px;top:868.50px;height:34.95px"></div>
<div class="ig" style="left:857.8px;top:868.50px;height:34.95px"></div>
<div class="ig" style="left:885.9px;top:868.50px;height:34.95px"></div>
<div class="ig" style="left:913.9px;top:868.50px;height:34.95px"></div>
<div class="ig" style="left:942.0px;top:868.50px;height:34.95px"></div>
<div class="ig" style="left:970.1px;top:868.50px;height:34.95px"></div>
<div class="ig" style="left:829.7px;top:903.15px;height:34.95px"></div>
<div class="ig" style="left:857.8px;top:903.15px;height:34.95px"></div>
<div class="ig" style="left:885.9px;top:903.15px;height:34.95px"></div>
<div class="ig" style="left:913.9px;top:903.15px;height:34.95px"></div>
<div class="ig" style="left:942.0px;top:903.15px;height:34.95px"></div>
<div class="ig" style="left:970.1px;top:903.15px;height:34.95px"></div>
<div class="ig" style="left:998.2px;top:903.15px;height:34.95px"></div>
<div class="ig" style="left:829.7px;top:937.80px;height:34.95px"></div>
<div class="ig" style="left:857.8px;top:937.80px;height:34.95px"></div>
<div class="ig" style="left:885.9px;top:937.80px;height:34.95px"></div>
<div class="ig" style="left:913.9px;top:937.80px;height:34.95px"></div>
<div class="ig" style="left:942.0px;top:937.80px;height:34.95px"></div>
<div class="ig" style="left:970.1px;top:937.80px;height:34.95px"></div>
<div class="ig" style="left:829.7px;top:972.45px;height:34.95px"></div>
<div class="ig" style="left:857.8px;top:972.45px;height:34.95px"></div>
<div class="ig" style="left:885.9px;top:972.45px;height:34.95px"></div>
<div class="ig" style="left:913.9px;top:972.45px;height:34.95px"></div>
<div class="ig" style="left:942.0px;top:972.45px;height:34.95px"></div>
<div class="ig" style="left:970.1px;top:972.45px;height:34.95px"></div>
<div class="ig" style="left:998.2px;top:972.45px;height:34.95px"></div>
<div class="ig" style="left:829.7px;top:1007.10px;height:34.95px"></div>
<div class="ig" style="left:857.8px;top:1007.10px;height:34.95px"></div>
<div class="ig" style="left:885.9px;top:1007.10px;height:34.95px"></div>
<div class="ig" style="left:913.9px;top:1007.10px;height:34.95px"></div>
<div class="ig" style="left:942.0px;top:1007.10px;height:34.95px"></div>
<div class="ig" style="left:970.1px;top:1007.10px;height:34.95px"></div>
<div class="ig" style="left:998.2px;top:1007.10px;height:34.95px"></div>
<div class="ig" style="left:829.7px;top:1041.75px;height:34.95px"></div>
<div class="ig" style="left:857.8px;top:1041.75px;height:34.95px"></div>
<div class="ig" style="left:885.9px;top:1041.75px;height:34.95px"></div>
<div class="ig" style="left:913.9px;top:1041.75px;height:34.95px"></div>
<div class="ig" style="left:942.0px;top:1041.75px;height:34.95px"></div>
<div class="ig" style="left:970.1px;top:1041.75px;height:34.95px"></div>
<div class="ig" style="left:998.2px;top:1041.75px;height:34.95px"></div>
<div class="ig" style="left:1026.3px;top:1041.75px;height:34.95px"></div>
<div class="ig" style="left:829.7px;top:1076.40px;height:34.95px"></div>
<div class="ig" style="left:857.8px;top:1076.40px;height:34.95px"></div>
<div class="ig" style="left:885.9px;top:1076.40px;height:34.95px"></div>
<div class="ig" style="left:913.9px;top:1076.40px;height:34.95px"></div>
<div class="ig" style="left:942.0px;top:1076.40px;height:34.95px"></div>
<div class="ig" style="left:970.1px;top:1076.40px;height:34.95px"></div>
<div class="ig" style="left:998.2px;top:1076.40px;height:34.95px"></div>
<div class="ig" style="left:1026.3px;top:1076.40px;height:34.95px"></div>
<div class="ig" style="left:829.7px;top:1111.05px;height:34.95px"></div>
<div class="ig" style="left:857.8px;top:1111.05px;height:34.95px"></div>
<div class="ig" style="left:885.9px;top:1111.05px;height:34.95px"></div>
<div class="ig" style="left:913.9px;top:1111.05px;height:34.95px"></div>
<div class="ig" style="left:942.0px;top:1111.05px;height:34.95px"></div>
<div class="ig" style="left:970.1px;top:1111.05px;height:34.95px"></div>
<div class="ig" style="left:998.2px;top:1111.05px;height:34.95px"></div>
<div class="ig" style="left:1026.3px;top:1111.05px;height:34.95px"></div>
<div class="ig" style="left:829.7px;top:1145.70px;height:34.95px"></div>
<div class="ig" style="left:857.8px;top:1145.70px;height:34.95px"></div>
<div class="ig" style="left:885.9px;top:1145.70px;height:34.95px"></div>
<div class="ig" style="left:913.9px;top:1145.70px;height:34.95px"></div>
<div class="ig" style="left:942.0px;top:1145.70px;height:34.95px"></div>
<div class="ig" style="left:970.1px;top:1145.70px;height:34.95px"></div>
<div class="ig" style="left:998.2px;top:1145.70px;height:34.95px"></div>
<div class="ig" style="left:1026.3px;top:1145.70px;height:34.95px"></div>
<div class="ig" style="left:829.7px;top:1180.35px;height:34.95px"></div>
<div class="ig" style="left:857.8px;top:1180.35px;height:34.95px"></div>
<div class="ig" style="left:885.9px;top:1180.35px;height:34.95px"></div>
<div class="ig" style="left:913.9px;top:1180.35px;height:34.95px"></div>
<div class="ig" style="left:942.0px;top:1180.35px;height:34.95px"></div>
<div class="ig" style="left:970.1px;top:1180.35px;height:34.95px"></div>
<div class="ig" style="left:998.2px;top:1180.35px;height:34.95px"></div>
<div class="ig" style="left:1026.3px;top:1180.35px;height:34.95px"></div>
<div class="ig" style="left:829.7px;top:1215.00px;height:34.95px"></div>
<div class="ig" style="left:857.8px;top:1215.00px;height:34.95px"></div>
<div class="ig" style="left:885.9px;top:1215.00px;height:34.95px"></div>
<div class="ig" style="left:913.9px;top:1215.00px;height:34.95px"></div>
<div class="ig" style="left:942.0px;top:1215.00px;height:34.95px"></div>
<div class="ig" style="left:970.1px;top:1215.00px;height:34.95px"></div>
<div class="ig" style="left:998.2px;top:1215.00px;height:34.95px"></div>
<div class="ig" style="left:829.7px;top:1249.65px;height:34.95px"></div>
<div class="ig" style="left:857.8px;top:1249.65px;height:34.95px"></div>
<div class="ig" style="left:885.9px;top:1249.65px;height:34.95px"></div>
<div class="ig" style="left:913.9px;top:1249.65px;height:34.95px"></div>
<div class="ig" style="left:942.0px;top:1249.65px;height:34.95px"></div>
<div class="ig" style="left:970.1px;top:1249.65px;height:34.95px"></div>
<div class="ig" style="left:998.2px;top:1249.65px;height:34.95px"></div>
<div class="ig" style="left:1026.3px;top:1249.65px;height:34.95px"></div>
<div class="ig" style="left:829.7px;top:1284.30px;height:34.95px"></div>
<div class="ig" style="left:857.8px;top:1284.30px;height:34.95px"></div>
<div class="ig" style="left:885.9px;top:1284.30px;height:34.95px"></div>
<div class="ig" style="left:913.9px;top:1284.30px;height:34.95px"></div>
<div class="ig" style="left:942.0px;top:1284.30px;height:34.95px"></div>
<div class="ig" style="left:970.1px;top:1284.30px;height:34.95px"></div>
<div class="ig" style="left:998.2px;top:1284.30px;height:34.95px"></div>
<div class="ig" style="left:829.7px;top:1318.95px;height:34.95px"></div>
<div class="ig" style="left:857.8px;top:1318.95px;height:34.95px"></div>
<div class="ig" style="left:885.9px;top:1318.95px;height:34.95px"></div>
<div class="ig" style="left:913.9px;top:1318.95px;height:34.95px"></div>
<div class="ig" style="left:942.0px;top:1318.95px;height:34.95px"></div>
<div class="ig" style="left:970.1px;top:1318.95px;height:34.95px"></div>
<div class="ig" style="left:829.7px;top:1353.60px;height:34.95px"></div>
<div class="ig" style="left:857.8px;top:1353.60px;height:34.95px"></div>
<div class="ig" style="left:885.9px;top:1353.60px;height:34.95px"></div>
<div class="ig" style="left:913.9px;top:1353.60px;height:34.95px"></div>
<div class="ig" style="left:942.0px;top:1353.60px;height:34.95px"></div>
<div class="ig" style="left:829.7px;top:1388.25px;height:34.95px"></div>
<div class="ig" style="left:857.8px;top:1388.25px;height:34.95px"></div>
<div class="ig" style="left:885.9px;top:1388.25px;height:34.95px"></div>
<div class="ig" style="left:913.9px;top:1388.25px;height:34.95px"></div>
<div class="ig" style="left:942.0px;top:1388.25px;height:34.95px"></div>
<div class="ig" style="left:829.7px;top:1422.90px;height:34.95px"></div>
<div class="ig" style="left:857.8px;top:1422.90px;height:34.95px"></div>
<div class="ig" style="left:885.9px;top:1422.90px;height:34.95px"></div>
<div class="ig" style="left:913.9px;top:1422.90px;height:34.95px"></div>
<div class="ig" style="left:942.0px;top:1422.90px;height:34.95px"></div>
<div class="ig" style="left:970.1px;top:1422.90px;height:34.95px"></div>
<div class="ig" style="left:829.7px;top:1457.55px;height:34.95px"></div>
<div class="ig" style="left:857.8px;top:1457.55px;height:34.95px"></div>
<div class="ig" style="left:885.9px;top:1457.55px;height:34.95px"></div>
<div class="ig" style="left:913.9px;top:1457.55px;height:34.95px"></div>
<div class="ig" style="left:942.0px;top:1457.55px;height:34.95px"></div>
<div class="ig" style="left:970.1px;top:1457.55px;height:34.95px"></div>
<div class="ig" style="left:998.2px;top:1457.55px;height:34.95px"></div>
</div>
<div class="a" style="left:831px;top:175.5px;width:1557px;height:1296.5px;overflow:hidden">
<div class="code" style="top:0.20px"><span style="color:#808080">&lt;!</span><span style="color:#569cd6">doctype</span><span style="color:#d4d4d4"> </span><span style="color:#9cdcfe">html</span><span style="color:#808080">&gt;</span></div>
<div class="code" style="top:34.85px"><span style="color:#808080">&lt;</span><span style="color:#569cd6">html</span><span style="color:#d4d4d4"> </span><span style="color:#9cdcfe">lang</span><span style="color:#d4d4d4">=</span><span style="color:#ce9178">&quot;en&quot;</span><span style="color:#d4d4d4"> </span><span style="color:#9cdcfe">xmlns:th</span><span style="color:#d4d4d4">=</span><span style="color:#ce9178">"<u style="text-decoration-thickness:2px;text-underline-offset:5px;text-decoration-skip-ink:none">http://www.thymeleaf.org</u>"</span><span style="color:#808080">&gt;</span></div>
<div class="code" style="top:69.50px"><span style="color:#d4d4d4">  </span><span style="color:#808080">&lt;</span><span style="color:#569cd6">th:block</span><span style="color:#d4d4d4"> </span><span style="color:#9cdcfe">th:fragment</span><span style="color:#d4d4d4">=</span><span style="color:#ce9178">&quot;footer&quot;</span><span style="color:#808080">&gt;</span></div>
<div class="code" style="top:104.15px"><span style="color:#d4d4d4">    </span><span style="color:#808080">&lt;</span><span style="color:#569cd6">footer</span></div>
<div class="code" style="top:138.80px"><span style="color:#d4d4d4">      </span><span style="color:#9cdcfe">class</span><span style="color:#d4d4d4">=</span><span style="color:#ce9178">&quot;joe_footer&quot;</span></div>
<div class="code" style="top:173.45px"><span style="color:#d4d4d4">      </span><span style="color:#9cdcfe">th:classappend</span><span style="color:#d4d4d4">=</span><span style="color:#ce9178">&quot;|${theme.config.footer.footer_position == &#x27;fixed&#x27;? &#x27;fixed&#x27; :&#x27;&#x27;} ${theme.config.footer.enable_copyright}&quot;</span></div>
<div class="code" style="top:208.10px"><span style="color:#d4d4d4">    </span><span style="color:#808080">&gt;</span></div>
<div class="code" style="top:242.75px"><span style="color:#d4d4d4">      </span><span style="color:#808080">&lt;</span><span style="color:#569cd6">div</span></div>
<div class="code" style="top:277.40px"><span style="color:#d4d4d4">        </span><span style="color:#9cdcfe">class</span><span style="color:#d4d4d4">=</span><span style="color:#ce9178">&quot;joe_container&quot;</span></div>
<div class="code" style="top:312.05px"><span style="color:#d4d4d4">        </span><span style="color:#9cdcfe">th:classappend</span><span style="color:#d4d4d4">=</span><span style="color:#ce9178">&quot;${theme.config.footer.enable_rss == false} and ${theme.config.footer.enable_sitemap ==false}&quot;</span></div>
<div class="code" style="top:346.70px"><span style="color:#d4d4d4">      </span><span style="color:#808080">&gt;</span></div>
<div class="code" style="top:381.35px"><span style="color:#d4d4d4">        </span><span style="color:#808080">&lt;</span><span style="color:#569cd6">div</span><span style="color:#d4d4d4"> </span><span style="color:#9cdcfe">class</span><span style="color:#d4d4d4">=</span><span style="color:#ce9178">&quot;item&quot;</span><span style="color:#808080">&gt;</span></div>
<div class="code" style="top:416.00px"><span style="color:#d4d4d4">          </span><span style="color:#808080">&lt;</span><span style="color:#569cd6">p</span><span style="color:#808080">&gt;</span></div>
<div class="code" style="top:450.65px"><span style="color:#d4d4d4">            © [[${#strings.substring(theme.config.footer.custom_birthday, 0, 4)}]] - [[${#dates.format(new java.util.Date().getTime(), &#x27;yyyy&#x27;)}]] </span><span style="color:#808080">&lt;</span><span style="color:#569cd6">a</span></div>
<div class="code" style="top:485.30px"><span style="color:#d4d4d4">              </span><span style="color:#9cdcfe">th:href</span><span style="color:#d4d4d4">=</span><span style="color:#ce9178">&quot;${site.url}&quot;</span></div>
<div class="code" style="top:519.95px"><span style="color:#d4d4d4">              </span><span style="color:#9cdcfe">target</span><span style="color:#d4d4d4">=</span><span style="color:#ce9178">&quot;_blank&quot;</span></div>
<div class="code" style="top:554.60px"><span style="color:#d4d4d4">              </span><span style="color:#9cdcfe">rel</span><span style="color:#d4d4d4">=</span><span style="color:#ce9178">&quot;noopener noreferrer&quot;</span></div>
<div class="code" style="top:589.25px"><span style="color:#d4d4d4">            </span><span style="color:#808080">&gt;</span></div>
<div class="code" style="top:623.90px"><span style="color:#d4d4d4">              [[${site.title}]]</span></div>
<div class="code" style="top:658.55px"><span style="color:#d4d4d4">            </span><span style="color:#808080">&lt;/</span><span style="color:#569cd6">a</span><span style="color:#808080">&gt;</span></div>
<div class="code" style="top:693.20px"><span style="color:#d4d4d4">            </span><span style="color:#808080">&lt;</span><span style="color:#569cd6">th:block</span></div>
<div class="code" style="top:727.85px"><span style="color:#d4d4d4">              </span><span style="color:#9cdcfe">th:if</span><span style="color:#d4d4d4">=</span><span style="color:#ce9178">&quot;${theme.config.footer.enable_icp} and ${#strings.trim(theme.config.basic.icp_police.icp) != &#x27;&#x27;}&quot;</span></div>
<div class="code" style="top:762.50px"><span style="color:#d4d4d4">            </span><span style="color:#808080">&gt;</span></div>
<div class="code" style="top:797.15px"><span style="color:#d4d4d4">              -</span></div>
<div class="code" style="top:831.80px"><span style="color:#d4d4d4">              </span><span style="color:#808080">&lt;</span><span style="color:#569cd6">a</span></div>
<div class="code" style="top:866.45px"><span style="color:#d4d4d4">                </span><span style="color:#9cdcfe">class</span><span style="color:#d4d4d4">=</span><span style="color:#ce9178">&quot;icp&quot;</span></div>
<div class="code" style="top:901.10px"><span style="color:#d4d4d4">                </span><span style="color:#9cdcfe">href</span><span style="color:#d4d4d4">=</span><span style="color:#ce9178">"<u style="text-decoration-thickness:2px;text-underline-offset:5px;text-decoration-skip-ink:none">https://beian.miit.gov.cn</u>"</span></div>
<div class="code" style="top:935.75px"><span style="color:#d4d4d4">                </span><span style="color:#9cdcfe">th:href</span><span style="color:#d4d4d4">=</span><span style="color:#ce9178">&quot;${theme.config.basic.icp_police.icp_link}&quot;</span></div>
<div class="code" style="top:970.40px"><span style="color:#d4d4d4">                </span><span style="color:#9cdcfe">target</span><span style="color:#d4d4d4">=</span><span style="color:#ce9178">&quot;_blank&quot;</span></div>
<div class="code" style="top:1005.05px"><span style="color:#d4d4d4">                </span><span style="color:#9cdcfe">rel</span><span style="color:#d4d4d4">=</span><span style="color:#ce9178">&quot;noopener noreferrer nofollow&quot;</span></div>
<div class="code" style="top:1039.70px"><span style="color:#d4d4d4">              </span><span style="color:#808080">&gt;</span></div>
<div class="code" style="top:1074.35px"><span style="color:#d4d4d4">                [[${theme.config.basic.icp_police.icp}]]</span></div>
<div class="code" style="top:1109.00px"><span style="color:#d4d4d4">              </span><span style="color:#808080">&lt;/</span><span style="color:#569cd6">a</span><span style="color:#808080">&gt;</span></div>
<div class="code" style="top:1143.65px"><span style="color:#d4d4d4">            </span><span style="color:#808080">&lt;/</span><span style="color:#569cd6">th:block</span><span style="color:#808080">&gt;</span></div>
<div class="code" style="top:1178.30px"><span style="color:#d4d4d4">          </span><span style="color:#808080">&lt;/</span><span style="color:#569cd6">p</span><span style="color:#808080">&gt;</span></div>
<div class="code" style="top:1212.95px"><span style="color:#d4d4d4">          </span><span style="color:#808080">&lt;</span><span style="color:#569cd6">th:block</span><span style="color:#d4d4d4"> </span><span style="color:#9cdcfe">th:if</span><span style="color:#d4d4d4">=</span><span style="color:#ce9178">&quot;${theme.config.footer.enable_powerby}&quot;</span><span style="color:#808080">&gt;</span></div>
<div class="code" style="top:1247.60px"><span style="color:#d4d4d4">            </span><span style="color:#808080">&lt;</span><span style="color:#569cd6">th:block</span><span style="color:#d4d4d4"> </span><span style="color:#9cdcfe">th:with</span><span style="color:#d4d4d4">=</span><span style="color:#ce9178">&quot;theme = ${themeFinder.activation()}&quot;</span><span style="color:#808080">&gt;</span></div>
<div class="code" style="top:1282.25px"><span style="color:#d4d4d4">              </span><span style="color:#808080">&lt;</span><span style="color:#569cd6">p</span><span style="color:#d4d4d4"> </span><span style="color:#9cdcfe">class</span><span style="color:#d4d4d4">=</span><span style="color:#ce9178">&quot;site-powered&quot;</span><span style="color:#808080">&gt;</span></div>
</div>
<div class="ln" style="top:175.50px">1</div>
<div class="ln" style="top:210.15px">2</div>
<div class="ln" style="top:244.80px">3</div>
<div class="ln" style="top:279.45px">4</div>
<div class="ln" style="top:314.10px">5</div>
<div class="ln" style="top:348.75px">6</div>
<div class="ln" style="top:383.40px">7</div>
<div class="ln" style="top:418.05px">8</div>
<div class="ln" style="top:452.70px">9</div>
<div class="ln" style="top:487.35px">10</div>
<div class="ln" style="top:522.00px">11</div>
<div class="ln" style="top:556.65px">12</div>
<div class="ln" style="top:591.30px">13</div>
<div class="ln" style="top:625.95px">14</div>
<div class="ln" style="top:660.60px">15</div>
<div class="ln" style="top:695.25px">16</div>
<div class="ln" style="top:729.90px">17</div>
<div class="ln" style="top:764.55px">18</div>
<div class="ln" style="top:799.20px">19</div>
<div class="ln" style="top:833.85px">20</div>
<div class="ln" style="top:868.50px">21</div>
<div class="ln" style="top:903.15px">22</div>
<div class="ln" style="top:937.80px">23</div>
<div class="ln" style="top:972.45px">24</div>
<div class="ln" style="top:1007.10px">25</div>
<div class="ln" style="top:1041.75px">26</div>
<div class="ln" style="top:1076.40px">27</div>
<div class="ln" style="top:1111.05px">28</div>
<div class="ln" style="top:1145.70px">29</div>
<div class="ln" style="top:1180.35px">30</div>
<div class="ln" style="top:1215.00px">31</div>
<div class="ln" style="top:1249.65px">32</div>
<div class="ln" style="top:1284.30px">33</div>
<div class="ln" style="top:1318.95px">34</div>
<div class="ln" style="top:1353.60px">35</div>
<div class="ln" style="top:1388.25px">36</div>
<div class="ln" style="top:1422.90px">37</div>
<div class="ln" style="top:1457.55px">38</div>
<div class="a" style="left:830px;top:174.5px;width:3px;height:34.5px;background:#aeafad"></div>
<div class="a" style="left:830px;top:1450px;width:1024px;height:22px;background:rgba(121,121,121,0.4)"></div>
<svg style="left:2388px;top:174px" width="119" height="1298"><g opacity="0.55" stroke-width="1.15" stroke-dasharray="0.9 0.35"><path d="M8 0.9h2" stroke="#808080"/><path d="M10 0.9h7" stroke="#569cd6"/><path d="M18 0.9h4" stroke="#9cdcfe"/><path d="M22 0.9h1" stroke="#808080"/><path d="M8 2.9h1" stroke="#808080"/><path d="M9 2.9h4" stroke="#569cd6"/><path d="M14 2.9h4" stroke="#9cdcfe"/><path d="M18 2.9h1" stroke="#d4d4d4"/><path d="M19 2.9h4" stroke="#ce9178"/><path d="M24 2.9h8" stroke="#9cdcfe"/><path d="M32 2.9h1" stroke="#d4d4d4"/><path d="M33 2.9h26" stroke="#ce9178"/><path d="M59 2.9h1" stroke="#808080"/><path d="M10 4.9h1" stroke="#808080"/><path d="M11 4.9h8" stroke="#569cd6"/><path d="M20 4.9h11" stroke="#9cdcfe"/><path d="M31 4.9h1" stroke="#d4d4d4"/><path d="M32 4.9h8" stroke="#ce9178"/><path d="M40 4.9h1" stroke="#808080"/><path d="M12 6.9h1" stroke="#808080"/><path d="M13 6.9h6" stroke="#569cd6"/><path d="M14 8.9h5" stroke="#9cdcfe"/><path d="M19 8.9h1" stroke="#d4d4d4"/><path d="M20 8.9h12" stroke="#ce9178"/><path d="M14 10.9h14" stroke="#9cdcfe"/><path d="M28 10.9h1" stroke="#d4d4d4"/><path d="M29 10.9h88" stroke="#ce9178"/><path d="M12 12.9h1" stroke="#808080"/><path d="M14 14.9h1" stroke="#808080"/><path d="M15 14.9h3" stroke="#569cd6"/><path d="M16 16.9h5" stroke="#9cdcfe"/><path d="M21 16.9h1" stroke="#d4d4d4"/><path d="M22 16.9h15" stroke="#ce9178"/><path d="M16 18.9h14" stroke="#9cdcfe"/><path d="M30 18.9h1" stroke="#d4d4d4"/><path d="M31 18.9h86" stroke="#ce9178"/><path d="M14 20.9h1" stroke="#808080"/><path d="M16 22.9h1" stroke="#808080"/><path d="M17 22.9h3" stroke="#569cd6"/><path d="M21 22.9h5" stroke="#9cdcfe"/><path d="M26 22.9h1" stroke="#d4d4d4"/><path d="M27 22.9h6" stroke="#ce9178"/><path d="M33 22.9h1" stroke="#808080"/><path d="M18 24.9h1" stroke="#808080"/><path d="M19 24.9h1" stroke="#569cd6"/><path d="M20 24.9h1" stroke="#808080"/><path d="M20 26.9h97" stroke="#d4d4d4"/><path d="M22 28.9h7" stroke="#9cdcfe"/><path d="M29 28.9h1" stroke="#d4d4d4"/><path d="M30 28.9h13" stroke="#ce9178"/><path d="M22 30.9h6" stroke="#9cdcfe"/><path d="M28 30.9h1" stroke="#d4d4d4"/><path d="M29 30.9h8" stroke="#ce9178"/><path d="M22 32.9h3" stroke="#9cdcfe"/><path d="M25 32.9h1" stroke="#d4d4d4"/><path d="M26 32.9h21" stroke="#ce9178"/><path d="M20 34.9h1" stroke="#808080"/><path d="M22 36.9h17" stroke="#d4d4d4"/><path d="M20 38.9h2" stroke="#808080"/><path d="M22 38.9h1" stroke="#569cd6"/><path d="M23 38.9h1" stroke="#808080"/><path d="M20 40.9h1" stroke="#808080"/><path d="M21 40.9h8" stroke="#569cd6"/><path d="M22 42.9h5" stroke="#9cdcfe"/><path d="M27 42.9h1" stroke="#d4d4d4"/><path d="M28 42.9h89" stroke="#ce9178"/><path d="M20 44.9h1" stroke="#808080"/><path d="M22 46.9h1" stroke="#d4d4d4"/><path d="M22 48.9h1" stroke="#808080"/><path d="M23 48.9h1" stroke="#569cd6"/><path d="M24 50.9h5" stroke="#9cdcfe"/><path d="M29 50.9h1" stroke="#d4d4d4"/><path d="M30 50.9h5" stroke="#ce9178"/><path d="M24 52.9h4" stroke="#9cdcfe"/><path d="M28 52.9h1" stroke="#d4d4d4"/><path d="M29 52.9h27" stroke="#ce9178"/><path d="M24 54.9h7" stroke="#9cdcfe"/><path d="M31 54.9h1" stroke="#d4d4d4"/><path d="M32 54.9h43" stroke="#ce9178"/><path d="M24 56.9h6" stroke="#9cdcfe"/><path d="M30 56.9h1" stroke="#d4d4d4"/><path d="M31 56.9h8" stroke="#ce9178"/><path d="M24 58.9h3" stroke="#9cdcfe"/><path d="M27 58.9h1" stroke="#d4d4d4"/><path d="M28 58.9h30" stroke="#ce9178"/><path d="M22 60.9h1" stroke="#808080"/><path d="M24 62.9h40" stroke="#d4d4d4"/><path d="M22 64.9h2" stroke="#808080"/><path d="M24 64.9h1" stroke="#569cd6"/><path d="M25 64.9h1" stroke="#808080"/><path d="M20 66.9h2" stroke="#808080"/><path d="M22 66.9h8" stroke="#569cd6"/><path d="M30 66.9h1" stroke="#808080"/><path d="M18 68.9h2" stroke="#808080"/><path d="M20 68.9h1" stroke="#569cd6"/><path d="M21 68.9h1" stroke="#808080"/><path d="M18 70.9h1" stroke="#808080"/><path d="M19 70.9h8" stroke="#569cd6"/><path d="M28 70.9h5" stroke="#9cdcfe"/><path d="M33 70.9h1" stroke="#d4d4d4"/><path d="M34 70.9h39" stroke="#ce9178"/><path d="M73 70.9h1" stroke="#808080"/><path d="M20 72.9h1" stroke="#808080"/><path d="M21 72.9h8" stroke="#569cd6"/><path d="M30 72.9h7" stroke="#9cdcfe"/><path d="M37 72.9h1" stroke="#d4d4d4"/><path d="M38 72.9h37" stroke="#ce9178"/><path d="M75 72.9h1" stroke="#808080"/><path d="M22 74.9h1" stroke="#808080"/><path d="M23 74.9h1" stroke="#569cd6"/><path d="M25 74.9h5" stroke="#9cdcfe"/><path d="M30 74.9h1" stroke="#d4d4d4"/><path d="M31 74.9h14" stroke="#ce9178"/><path d="M45 74.9h1" stroke="#808080"/><path d="M24 76.9h1" stroke="#808080"/><path d="M25 76.9h4" stroke="#569cd6"/><path d="M29 76.9h1" stroke="#808080"/><path d="M30 76.9h10" stroke="#d4d4d4"/><path d="M40 76.9h2" stroke="#808080"/><path d="M42 76.9h4" stroke="#569cd6"/><path d="M46 76.9h1" stroke="#808080"/><path d="M24 78.9h1" stroke="#808080"/><path d="M25 78.9h1" stroke="#569cd6"/><path d="M26 80.9h4" stroke="#9cdcfe"/><path d="M30 80.9h1" stroke="#d4d4d4"/><path d="M31 80.9h22" stroke="#ce9178"/><path d="M26 82.9h6" stroke="#9cdcfe"/><path d="M32 82.9h1" stroke="#d4d4d4"/><path d="M33 82.9h8" stroke="#ce9178"/><path d="M26 84.9h3" stroke="#9cdcfe"/><path d="M29 84.9h1" stroke="#d4d4d4"/><path d="M30 84.9h21" stroke="#ce9178"/><path d="M24 86.9h1" stroke="#808080"/><path d="M26 88.9h4" stroke="#d4d4d4"/><path d="M24 90.9h2" stroke="#808080"/><path d="M26 90.9h1" stroke="#569cd6"/><path d="M27 90.9h1" stroke="#808080"/><path d="M24 92.9h1" stroke="#808080"/><path d="M25 92.9h4" stroke="#569cd6"/><path d="M29 92.9h1" stroke="#808080"/><path d="M30 92.9h17" stroke="#d4d4d4"/><path d="M47 92.9h2" stroke="#808080"/><path d="M49 92.9h4" stroke="#569cd6"/><path d="M53 92.9h1" stroke="#808080"/><path d="M24 94.9h1" stroke="#808080"/><path d="M25 94.9h1" stroke="#569cd6"/><path d="M27 94.9h4" stroke="#9cdcfe"/><path d="M31 94.9h1" stroke="#d4d4d4"/><path d="M32 94.9h50" stroke="#ce9178"/><path d="M83 94.9h6" stroke="#9cdcfe"/><path d="M89 94.9h1" stroke="#d4d4d4"/><path d="M90 94.9h8" stroke="#ce9178"/><path d="M98 94.9h1" stroke="#808080"/><path d="M99 94.9h18" stroke="#d4d4d4"/><path d="M22 96.9h2" stroke="#808080"/><path d="M24 96.9h1" stroke="#569cd6"/><path d="M25 96.9h1" stroke="#808080"/><path d="M20 98.9h2" stroke="#808080"/><path d="M22 98.9h8" stroke="#569cd6"/><path d="M30 98.9h1" stroke="#808080"/><path d="M18 100.9h2" stroke="#808080"/><path d="M20 100.9h8" stroke="#569cd6"/><path d="M28 100.9h1" stroke="#808080"/><path d="M16 102.9h2" stroke="#808080"/><path d="M18 102.9h3" stroke="#569cd6"/><path d="M21 102.9h1" stroke="#808080"/><path d="M16 104.9h1" stroke="#808080"/><path d="M17 104.9h3" stroke="#569cd6"/><path d="M21 104.9h5" stroke="#9cdcfe"/><path d="M26 104.9h1" stroke="#d4d4d4"/><path d="M27 104.9h6" stroke="#ce9178"/><path d="M33 104.9h1" stroke="#808080"/><path d="M18 106.9h1" stroke="#808080"/><path d="M19 106.9h8" stroke="#569cd6"/><path d="M28 106.9h5" stroke="#9cdcfe"/><path d="M33 106.9h1" stroke="#d4d4d4"/><path d="M34 106.9h35" stroke="#ce9178"/><path d="M69 106.9h1" stroke="#808080"/><path d="M20 108.9h1" stroke="#808080"/><path d="M21 108.9h1" stroke="#569cd6"/><path d="M23 108.9h5" stroke="#9cdcfe"/><path d="M28 108.9h1" stroke="#d4d4d4"/><path d="M29 108.9h10" stroke="#ce9178"/><path d="M40 108.9h7" stroke="#9cdcfe"/><path d="M47 108.9h1" stroke="#d4d4d4"/><path d="M48 108.9h13" stroke="#ce9178"/><path d="M62 108.9h6" stroke="#9cdcfe"/><path d="M68 108.9h1" stroke="#d4d4d4"/><path d="M69 108.9h8" stroke="#ce9178"/><path d="M78 108.9h3" stroke="#9cdcfe"/><path d="M81 108.9h1" stroke="#d4d4d4"/><path d="M82 108.9h30" stroke="#ce9178"/><path d="M112 108.9h1" stroke="#808080"/><path d="M22 110.9h1" stroke="#808080"/><path d="M23 110.9h3" stroke="#569cd6"/><path d="M27 110.9h5" stroke="#9cdcfe"/><path d="M32 110.9h1" stroke="#d4d4d4"/><path d="M33 110.9h6" stroke="#ce9178"/><path d="M40 110.9h7" stroke="#9cdcfe"/><path d="M47 110.9h1" stroke="#d4d4d4"/><path d="M48 110.9h15" stroke="#ce9178"/><path d="M64 110.9h5" stroke="#9cdcfe"/><path d="M69 110.9h1" stroke="#d4d4d4"/><path d="M70 110.9h28" stroke="#ce9178"/><path d="M99 110.9h5" stroke="#9cdcfe"/><path d="M104 110.9h1" stroke="#d4d4d4"/><path d="M105 110.9h4" stroke="#ce9178"/><path d="M110 110.9h6" stroke="#9cdcfe"/><path d="M116 110.9h1" stroke="#d4d4d4"/><path d="M24 112.9h1" stroke="#808080"/><path d="M25 112.9h4" stroke="#569cd6"/><path d="M30 112.9h1" stroke="#9cdcfe"/><path d="M31 112.9h1" stroke="#d4d4d4"/><path d="M32 112.9h82" stroke="#ce9178"/><path d="M115 112.9h2" stroke="#9cdcfe"/><path d="M22 114.9h2" stroke="#808080"/><path d="M24 114.9h3" stroke="#569cd6"/><path d="M27 114.9h1" stroke="#808080"/><path d="M22 116.9h1" stroke="#808080"/><path d="M23 116.9h4" stroke="#569cd6"/><path d="M27 116.9h1" stroke="#808080"/><path d="M28 116.9h3" stroke="#d4d4d4"/><path d="M31 116.9h2" stroke="#808080"/><path d="M33 116.9h4" stroke="#569cd6"/><path d="M37 116.9h1" stroke="#808080"/><path d="M20 118.9h2" stroke="#808080"/><path d="M22 118.9h1" stroke="#569cd6"/><path d="M23 118.9h1" stroke="#808080"/><path d="M18 120.9h2" stroke="#808080"/><path d="M20 120.9h8" stroke="#569cd6"/><path d="M28 120.9h1" stroke="#808080"/><path d="M18 122.9h1" stroke="#808080"/><path d="M19 122.9h8" stroke="#569cd6"/><path d="M28 122.9h5" stroke="#9cdcfe"/><path d="M33 122.9h1" stroke="#d4d4d4"/><path d="M34 122.9h39" stroke="#ce9178"/><path d="M73 122.9h1" stroke="#808080"/><path d="M20 124.9h1" stroke="#808080"/><path d="M21 124.9h1" stroke="#569cd6"/><path d="M23 124.9h5" stroke="#9cdcfe"/><path d="M28 124.9h1" stroke="#d4d4d4"/><path d="M29 124.9h14" stroke="#ce9178"/><path d="M44 124.9h7" stroke="#9cdcfe"/><path d="M51 124.9h1" stroke="#d4d4d4"/><path d="M52 124.9h17" stroke="#ce9178"/><path d="M70 124.9h6" stroke="#9cdcfe"/><path d="M76 124.9h1" stroke="#d4d4d4"/><path d="M77 124.9h8" stroke="#ce9178"/><path d="M86 124.9h3" stroke="#9cdcfe"/><path d="M89 124.9h1" stroke="#d4d4d4"/><path d="M90 124.9h27" stroke="#ce9178"/><path d="M22 126.9h1" stroke="#808080"/><path d="M23 126.9h3" stroke="#569cd6"/><path d="M27 126.9h5" stroke="#9cdcfe"/><path d="M32 126.9h1" stroke="#d4d4d4"/><path d="M33 126.9h6" stroke="#ce9178"/><path d="M40 126.9h7" stroke="#9cdcfe"/><path d="M47 126.9h1" stroke="#d4d4d4"/><path d="M48 126.9h15" stroke="#ce9178"/><path d="M64 126.9h5" stroke="#9cdcfe"/><path d="M69 126.9h1" stroke="#d4d4d4"/><path d="M70 126.9h28" stroke="#ce9178"/><path d="M99 126.9h5" stroke="#9cdcfe"/><path d="M104 126.9h1" stroke="#d4d4d4"/><path d="M105 126.9h4" stroke="#ce9178"/><path d="M110 126.9h6" stroke="#9cdcfe"/><path d="M116 126.9h1" stroke="#d4d4d4"/><path d="M24 128.9h1" stroke="#808080"/><path d="M25 128.9h4" stroke="#569cd6"/><path d="M30 128.9h1" stroke="#9cdcfe"/><path d="M31 128.9h1" stroke="#d4d4d4"/><path d="M32 128.9h50" stroke="#ce9178"/><path d="M83 128.9h4" stroke="#9cdcfe"/><path d="M87 128.9h1" stroke="#d4d4d4"/><path d="M88 128.9h9" stroke="#ce9178"/><path d="M97 128.9h1" stroke="#808080"/><path d="M98 128.9h2" stroke="#808080"/><path d="M100 128.9h4" stroke="#569cd6"/><path d="M104 128.9h1" stroke="#808080"/><path d="M22 130.9h2" stroke="#808080"/><path d="M24 130.9h3" stroke="#569cd6"/><path d="M27 130.9h1" stroke="#808080"/><path d="M22 132.9h1" stroke="#808080"/><path d="M23 132.9h4" stroke="#569cd6"/><path d="M27 132.9h1" stroke="#808080"/><path d="M28 132.9h7" stroke="#d4d4d4"/><path d="M35 132.9h2" stroke="#808080"/><path d="M37 132.9h4" stroke="#569cd6"/><path d="M41 132.9h1" stroke="#808080"/><path d="M20 134.9h2" stroke="#808080"/><path d="M22 134.9h1" stroke="#569cd6"/><path d="M23 134.9h1" stroke="#808080"/><path d="M18 136.9h2" stroke="#808080"/><path d="M20 136.9h8" stroke="#569cd6"/><path d="M28 136.9h1" stroke="#808080"/><path d="M16 138.9h2" stroke="#808080"/><path d="M18 138.9h3" stroke="#569cd6"/><path d="M21 138.9h1" stroke="#808080"/><path d="M14 140.9h2" stroke="#808080"/><path d="M16 140.9h3" stroke="#569cd6"/><path d="M19 140.9h1" stroke="#808080"/><path d="M12 142.9h2" stroke="#808080"/><path d="M14 142.9h6" stroke="#569cd6"/><path d="M20 142.9h1" stroke="#808080"/><path d="M18 144.9h1" stroke="#808080"/><path d="M19 144.9h8" stroke="#569cd6"/><path d="M28 144.9h5" stroke="#9cdcfe"/><path d="M33 144.9h1" stroke="#d4d4d4"/><path d="M34 144.9h77" stroke="#ce9178"/><path d="M111 144.9h1" stroke="#808080"/><path d="M20 146.9h1" stroke="#808080"/><path d="M21 146.9h3" stroke="#569cd6"/><path d="M25 146.9h5" stroke="#9cdcfe"/><path d="M30 146.9h1" stroke="#d4d4d4"/><path d="M31 146.9h9" stroke="#ce9178"/><path d="M40 146.9h1" stroke="#808080"/><path d="M22 148.9h1" stroke="#808080"/><path d="M23 148.9h1" stroke="#569cd6"/><path d="M25 148.9h5" stroke="#9cdcfe"/><path d="M30 148.9h1" stroke="#d4d4d4"/><path d="M31 148.9h9" stroke="#ce9178"/><path d="M41 148.9h7" stroke="#9cdcfe"/><path d="M48 148.9h1" stroke="#d4d4d4"/><path d="M49 148.9h32" stroke="#ce9178"/><path d="M82 148.9h6" stroke="#9cdcfe"/><path d="M88 148.9h1" stroke="#d4d4d4"/><path d="M89 148.9h8" stroke="#ce9178"/><path d="M97 148.9h1" stroke="#808080"/><path d="M24 150.9h1" stroke="#808080"/><path d="M25 150.9h3" stroke="#569cd6"/><path d="M29 150.9h5" stroke="#9cdcfe"/><path d="M34 150.9h1" stroke="#d4d4d4"/><path d="M35 150.9h6" stroke="#ce9178"/><path d="M42 150.9h7" stroke="#9cdcfe"/><path d="M49 150.9h1" stroke="#d4d4d4"/><path d="M50 150.9h15" stroke="#ce9178"/><path d="M66 150.9h5" stroke="#9cdcfe"/><path d="M71 150.9h1" stroke="#d4d4d4"/><path d="M72 150.9h4" stroke="#ce9178"/><path d="M77 150.9h6" stroke="#9cdcfe"/><path d="M83 150.9h1" stroke="#d4d4d4"/><path d="M84 150.9h4" stroke="#ce9178"/><path d="M88 150.9h1" stroke="#808080"/><path d="M26 152.9h1" stroke="#808080"/><path d="M27 152.9h4" stroke="#569cd6"/><path d="M32 152.9h1" stroke="#9cdcfe"/><path d="M33 152.9h1" stroke="#d4d4d4"/><path d="M34 152.9h49" stroke="#ce9178"/><path d="M83 152.9h1" stroke="#808080"/><path d="M84 152.9h2" stroke="#808080"/><path d="M86 152.9h4" stroke="#569cd6"/><path d="M90 152.9h1" stroke="#808080"/><path d="M24 154.9h2" stroke="#808080"/><path d="M26 154.9h3" stroke="#569cd6"/><path d="M29 154.9h1" stroke="#808080"/><path d="M24 156.9h1" stroke="#808080"/><path d="M25 156.9h4" stroke="#569cd6"/><path d="M30 156.9h7" stroke="#9cdcfe"/><path d="M37 156.9h1" stroke="#d4d4d4"/><path d="M38 156.9h32" stroke="#ce9178"/><path d="M70 156.9h1" stroke="#808080"/><path d="M71 156.9h2" stroke="#808080"/><path d="M73 156.9h4" stroke="#569cd6"/><path d="M77 156.9h1" stroke="#808080"/><path d="M22 158.9h2" stroke="#808080"/><path d="M24 158.9h1" stroke="#569cd6"/><path d="M25 158.9h1" stroke="#808080"/><path d="M20 160.9h2" stroke="#808080"/><path d="M22 160.9h3" stroke="#569cd6"/><path d="M25 160.9h1" stroke="#808080"/><path d="M18 162.9h2" stroke="#808080"/><path d="M20 162.9h8" stroke="#569cd6"/><path d="M28 162.9h1" stroke="#808080"/><path d="M18 164.9h1" stroke="#808080"/><path d="M19 164.9h8" stroke="#569cd6"/><path d="M28 164.9h5" stroke="#9cdcfe"/><path d="M33 164.9h1" stroke="#d4d4d4"/><path d="M34 164.9h83" stroke="#ce9178"/><path d="M20 166.9h1" stroke="#808080"/><path d="M21 166.9h3" stroke="#569cd6"/><path d="M25 166.9h5" stroke="#9cdcfe"/><path d="M30 166.9h1" stroke="#d4d4d4"/><path d="M31 166.9h13" stroke="#ce9178"/><path d="M44 166.9h1" stroke="#808080"/><path d="M22 168.9h1" stroke="#808080"/><path d="M23 168.9h1" stroke="#569cd6"/><path d="M25 168.9h5" stroke="#9cdcfe"/><path d="M30 168.9h1" stroke="#d4d4d4"/><path d="M31 168.9h9" stroke="#ce9178"/><path d="M41 168.9h7" stroke="#9cdcfe"/><path d="M48 168.9h1" stroke="#d4d4d4"/><path d="M49 168.9h36" stroke="#ce9178"/><path d="M86 168.9h6" stroke="#9cdcfe"/><path d="M92 168.9h1" stroke="#d4d4d4"/><path d="M93 168.9h8" stroke="#ce9178"/><path d="M101 168.9h1" stroke="#808080"/><path d="M24 170.9h1" stroke="#808080"/><path d="M25 170.9h3" stroke="#569cd6"/><path d="M29 170.9h6" stroke="#9cdcfe"/><path d="M35 170.9h1" stroke="#d4d4d4"/><path d="M36 170.9h38" stroke="#ce9178"/><path d="M75 170.9h3" stroke="#9cdcfe"/><path d="M78 170.9h1" stroke="#d4d4d4"/><path d="M79 170.9h8" stroke="#ce9178"/><path d="M88 170.9h2" stroke="#808080"/><path d="M24 172.9h1" stroke="#808080"/><path d="M25 172.9h3" stroke="#569cd6"/><path d="M29 172.9h5" stroke="#9cdcfe"/><path d="M34 172.9h1" stroke="#d4d4d4"/><path d="M35 172.9h8" stroke="#ce9178"/><path d="M43 172.9h1" stroke="#808080"/><path d="M24 174.9h1" stroke="#808080"/><path d="M25 174.9h3" stroke="#569cd6"/><path d="M29 174.9h5" stroke="#9cdcfe"/><path d="M34 174.9h1" stroke="#d4d4d4"/><path d="M35 174.9h6" stroke="#ce9178"/><path d="M42 174.9h7" stroke="#9cdcfe"/><path d="M49 174.9h1" stroke="#d4d4d4"/><path d="M50 174.9h15" stroke="#ce9178"/><path d="M66 174.9h5" stroke="#9cdcfe"/><path d="M71 174.9h1" stroke="#d4d4d4"/><path d="M72 174.9h4" stroke="#ce9178"/><path d="M77 174.9h6" stroke="#9cdcfe"/><path d="M83 174.9h1" stroke="#d4d4d4"/><path d="M84 174.9h4" stroke="#ce9178"/><path d="M88 174.9h1" stroke="#808080"/><path d="M26 176.9h1" stroke="#808080"/><path d="M27 176.9h4" stroke="#569cd6"/><path d="M32 176.9h1" stroke="#9cdcfe"/><path d="M33 176.9h1" stroke="#d4d4d4"/><path d="M34 176.9h49" stroke="#ce9178"/><path d="M83 176.9h1" stroke="#808080"/><path d="M84 176.9h2" stroke="#808080"/><path d="M86 176.9h4" stroke="#569cd6"/><path d="M90 176.9h1" stroke="#808080"/><path d="M24 178.9h2" stroke="#808080"/><path d="M26 178.9h3" stroke="#569cd6"/><path d="M29 178.9h1" stroke="#808080"/><path d="M24 180.9h1" stroke="#808080"/><path d="M25 180.9h4" stroke="#569cd6"/><path d="M30 180.9h7" stroke="#9cdcfe"/><path d="M37 180.9h1" stroke="#d4d4d4"/><path d="M38 180.9h36" stroke="#ce9178"/><path d="M74 180.9h1" stroke="#808080"/><path d="M75 180.9h2" stroke="#808080"/><path d="M77 180.9h4" stroke="#569cd6"/><path d="M81 180.9h1" stroke="#808080"/><path d="M22 182.9h2" stroke="#808080"/><path d="M24 182.9h1" stroke="#569cd6"/><path d="M25 182.9h1" stroke="#808080"/><path d="M20 184.9h2" stroke="#808080"/><path d="M22 184.9h3" stroke="#569cd6"/><path d="M25 184.9h1" stroke="#808080"/><path d="M18 186.9h2" stroke="#808080"/><path d="M20 186.9h8" stroke="#569cd6"/><path d="M28 186.9h1" stroke="#808080"/><path d="M18 188.9h1" stroke="#808080"/><path d="M19 188.9h8" stroke="#569cd6"/><path d="M28 188.9h5" stroke="#9cdcfe"/><path d="M33 188.9h1" stroke="#d4d4d4"/><path d="M34 188.9h83" stroke="#ce9178"/><path d="M20 190.9h1" stroke="#808080"/><path d="M21 190.9h3" stroke="#569cd6"/><path d="M25 190.9h5" stroke="#9cdcfe"/><path d="M30 190.9h1" stroke="#d4d4d4"/><path d="M31 190.9h12" stroke="#ce9178"/><path d="M43 190.9h1" stroke="#808080"/><path d="M22 192.9h1" stroke="#808080"/><path d="M23 192.9h1" stroke="#569cd6"/><path d="M25 192.9h5" stroke="#9cdcfe"/><path d="M30 192.9h1" stroke="#d4d4d4"/><path d="M31 192.9h9" stroke="#ce9178"/><path d="M41 192.9h7" stroke="#9cdcfe"/><path d="M48 192.9h1" stroke="#d4d4d4"/><path d="M49 192.9h35" stroke="#ce9178"/><path d="M85 192.9h6" stroke="#9cdcfe"/><path d="M91 192.9h1" stroke="#d4d4d4"/><path d="M92 192.9h8" stroke="#ce9178"/><path d="M100 192.9h1" stroke="#808080"/><path d="M24 194.9h1" stroke="#808080"/><path d="M25 194.9h3" stroke="#569cd6"/><path d="M29 194.9h5" stroke="#9cdcfe"/><path d="M34 194.9h1" stroke="#d4d4d4"/><path d="M35 194.9h6" stroke="#ce9178"/><path d="M42 194.9h7" stroke="#9cdcfe"/><path d="M49 194.9h1" stroke="#d4d4d4"/><path d="M50 194.9h15" stroke="#ce9178"/><path d="M66 194.9h5" stroke="#9cdcfe"/><path d="M71 194.9h1" stroke="#d4d4d4"/><path d="M72 194.9h4" stroke="#ce9178"/><path d="M77 194.9h6" stroke="#9cdcfe"/><path d="M83 194.9h1" stroke="#d4d4d4"/><path d="M84 194.9h4" stroke="#ce9178"/><path d="M88 194.9h1" stroke="#808080"/><path d="M26 196.9h1" stroke="#808080"/><path d="M27 196.9h4" stroke="#569cd6"/><path d="M32 196.9h1" stroke="#9cdcfe"/><path d="M33 196.9h1" stroke="#d4d4d4"/><path d="M34 196.9h49" stroke="#ce9178"/><path d="M83 196.9h1" stroke="#808080"/><path d="M84 196.9h2" stroke="#808080"/><path d="M86 196.9h4" stroke="#569cd6"/><path d="M90 196.9h1" stroke="#808080"/><path d="M24 198.9h2" stroke="#808080"/><path d="M26 198.9h3" stroke="#569cd6"/><path d="M29 198.9h1" stroke="#808080"/><path d="M24 200.9h1" stroke="#808080"/><path d="M25 200.9h4" stroke="#569cd6"/><path d="M30 200.9h7" stroke="#9cdcfe"/><path d="M37 200.9h1" stroke="#d4d4d4"/><path d="M38 200.9h35" stroke="#ce9178"/><path d="M73 200.9h1" stroke="#808080"/><path d="M74 200.9h2" stroke="#808080"/><path d="M76 200.9h4" stroke="#569cd6"/><path d="M80 200.9h1" stroke="#808080"/><path d="M22 202.9h2" stroke="#808080"/><path d="M24 202.9h1" stroke="#569cd6"/><path d="M25 202.9h1" stroke="#808080"/><path d="M20 204.9h2" stroke="#808080"/><path d="M22 204.9h3" stroke="#569cd6"/><path d="M25 204.9h1" stroke="#808080"/><path d="M18 206.9h2" stroke="#808080"/><path d="M20 206.9h8" stroke="#569cd6"/><path d="M28 206.9h1" stroke="#808080"/><path d="M18 208.9h1" stroke="#808080"/><path d="M19 208.9h8" stroke="#569cd6"/><path d="M28 208.9h5" stroke="#9cdcfe"/><path d="M33 208.9h1" stroke="#d4d4d4"/><path d="M34 208.9h83" stroke="#ce9178"/><path d="M20 210.9h1" stroke="#808080"/><path d="M21 210.9h3" stroke="#569cd6"/><path d="M25 210.9h5" stroke="#9cdcfe"/><path d="M30 210.9h1" stroke="#d4d4d4"/><path d="M31 210.9h13" stroke="#ce9178"/><path d="M44 210.9h1" stroke="#808080"/><path d="M22 212.9h1" stroke="#808080"/><path d="M23 212.9h1" stroke="#569cd6"/><path d="M25 212.9h5" stroke="#9cdcfe"/><path d="M30 212.9h1" stroke="#d4d4d4"/><path d="M31 212.9h9" stroke="#ce9178"/><path d="M41 212.9h7" stroke="#9cdcfe"/><path d="M48 212.9h1" stroke="#d4d4d4"/><path d="M49 212.9h36" stroke="#ce9178"/><path d="M86 212.9h6" stroke="#9cdcfe"/><path d="M92 212.9h1" stroke="#d4d4d4"/><path d="M93 212.9h8" stroke="#ce9178"/><path d="M101 212.9h1" stroke="#808080"/><path d="M24 214.9h1" stroke="#808080"/><path d="M25 214.9h3" stroke="#569cd6"/><path d="M29 214.9h6" stroke="#9cdcfe"/><path d="M35 214.9h1" stroke="#d4d4d4"/><path d="M36 214.9h38" stroke="#ce9178"/><path d="M75 214.9h3" stroke="#9cdcfe"/><path d="M78 214.9h1" stroke="#d4d4d4"/><path d="M79 214.9h8" stroke="#ce9178"/><path d="M88 214.9h2" stroke="#808080"/><path d="M24 216.9h1" stroke="#808080"/><path d="M25 216.9h3" stroke="#569cd6"/><path d="M29 216.9h5" stroke="#9cdcfe"/><path d="M34 216.9h1" stroke="#d4d4d4"/><path d="M35 216.9h8" stroke="#ce9178"/><path d="M43 216.9h1" stroke="#808080"/><path d="M24 218.9h1" stroke="#808080"/><path d="M25 218.9h3" stroke="#569cd6"/><path d="M29 218.9h5" stroke="#9cdcfe"/><path d="M34 218.9h1" stroke="#d4d4d4"/><path d="M35 218.9h6" stroke="#ce9178"/><path d="M42 218.9h7" stroke="#9cdcfe"/><path d="M49 218.9h1" stroke="#d4d4d4"/><path d="M50 218.9h15" stroke="#ce9178"/><path d="M66 218.9h5" stroke="#9cdcfe"/><path d="M71 218.9h1" stroke="#d4d4d4"/><path d="M72 218.9h4" stroke="#ce9178"/><path d="M77 218.9h6" stroke="#9cdcfe"/><path d="M83 218.9h1" stroke="#d4d4d4"/><path d="M84 218.9h4" stroke="#ce9178"/><path d="M88 218.9h1" stroke="#808080"/><path d="M26 220.9h1" stroke="#808080"/><path d="M27 220.9h4" stroke="#569cd6"/><path d="M32 220.9h1" stroke="#9cdcfe"/><path d="M33 220.9h1" stroke="#d4d4d4"/><path d="M34 220.9h49" stroke="#ce9178"/><path d="M83 220.9h1" stroke="#808080"/><path d="M84 220.9h2" stroke="#808080"/><path d="M86 220.9h4" stroke="#569cd6"/><path d="M90 220.9h1" stroke="#808080"/><path d="M24 222.9h2" stroke="#808080"/><path d="M26 222.9h3" stroke="#569cd6"/><path d="M29 222.9h1" stroke="#808080"/><path d="M24 224.9h1" stroke="#808080"/><path d="M25 224.9h4" stroke="#569cd6"/><path d="M30 224.9h7" stroke="#9cdcfe"/><path d="M37 224.9h1" stroke="#d4d4d4"/><path d="M38 224.9h36" stroke="#ce9178"/><path d="M74 224.9h1" stroke="#808080"/><path d="M75 224.9h2" stroke="#808080"/><path d="M77 224.9h4" stroke="#569cd6"/><path d="M81 224.9h1" stroke="#808080"/><path d="M22 226.9h2" stroke="#808080"/><path d="M24 226.9h1" stroke="#569cd6"/><path d="M25 226.9h1" stroke="#808080"/><path d="M20 228.9h2" stroke="#808080"/><path d="M22 228.9h3" stroke="#569cd6"/><path d="M25 228.9h1" stroke="#808080"/><path d="M18 230.9h2" stroke="#808080"/><path d="M20 230.9h8" stroke="#569cd6"/><path d="M28 230.9h1" stroke="#808080"/><path d="M18 232.9h1" stroke="#808080"/><path d="M19 232.9h8" stroke="#569cd6"/><path d="M28 232.9h5" stroke="#9cdcfe"/><path d="M33 232.9h1" stroke="#d4d4d4"/><path d="M34 232.9h83" stroke="#ce9178"/><path d="M20 234.9h1" stroke="#808080"/><path d="M21 234.9h3" stroke="#569cd6"/><path d="M25 234.9h5" stroke="#9cdcfe"/><path d="M30 234.9h1" stroke="#d4d4d4"/><path d="M31 234.9h12" stroke="#ce9178"/><path d="M43 234.9h1" stroke="#808080"/><path d="M22 236.9h1" stroke="#808080"/><path d="M23 236.9h1" stroke="#569cd6"/><path d="M25 236.9h5" stroke="#9cdcfe"/><path d="M30 236.9h1" stroke="#d4d4d4"/><path d="M31 236.9h9" stroke="#ce9178"/><path d="M41 236.9h7" stroke="#9cdcfe"/><path d="M48 236.9h1" stroke="#d4d4d4"/><path d="M49 236.9h35" stroke="#ce9178"/><path d="M85 236.9h6" stroke="#9cdcfe"/><path d="M91 236.9h1" stroke="#d4d4d4"/><path d="M92 236.9h8" stroke="#ce9178"/><path d="M100 236.9h1" stroke="#808080"/><path d="M24 238.9h1" stroke="#808080"/><path d="M25 238.9h3" stroke="#569cd6"/><path d="M29 238.9h5" stroke="#9cdcfe"/><path d="M34 238.9h1" stroke="#d4d4d4"/><path d="M35 238.9h6" stroke="#ce9178"/><path d="M42 238.9h7" stroke="#9cdcfe"/><path d="M49 238.9h1" stroke="#d4d4d4"/><path d="M50 238.9h15" stroke="#ce9178"/><path d="M66 238.9h5" stroke="#9cdcfe"/><path d="M71 238.9h1" stroke="#d4d4d4"/><path d="M72 238.9h4" stroke="#ce9178"/><path d="M77 238.9h6" stroke="#9cdcfe"/><path d="M83 238.9h1" stroke="#d4d4d4"/><path d="M84 238.9h4" stroke="#ce9178"/><path d="M88 238.9h1" stroke="#808080"/><path d="M26 240.9h1" stroke="#808080"/><path d="M27 240.9h4" stroke="#569cd6"/><path d="M32 240.9h1" stroke="#9cdcfe"/><path d="M33 240.9h1" stroke="#d4d4d4"/><path d="M34 240.9h49" stroke="#ce9178"/><path d="M83 240.9h1" stroke="#808080"/><path d="M84 240.9h2" stroke="#808080"/><path d="M86 240.9h4" stroke="#569cd6"/><path d="M90 240.9h1" stroke="#808080"/><path d="M24 242.9h2" stroke="#808080"/><path d="M26 242.9h3" stroke="#569cd6"/><path d="M29 242.9h1" stroke="#808080"/><path d="M24 244.9h1" stroke="#808080"/><path d="M25 244.9h4" stroke="#569cd6"/><path d="M30 244.9h7" stroke="#9cdcfe"/><path d="M37 244.9h1" stroke="#d4d4d4"/><path d="M38 244.9h35" stroke="#ce9178"/><path d="M73 244.9h1" stroke="#808080"/><path d="M74 244.9h2" stroke="#808080"/><path d="M76 244.9h4" stroke="#569cd6"/><path d="M80 244.9h1" stroke="#808080"/><path d="M22 246.9h2" stroke="#808080"/><path d="M24 246.9h1" stroke="#569cd6"/><path d="M25 246.9h1" stroke="#808080"/><path d="M20 248.9h2" stroke="#808080"/><path d="M22 248.9h3" stroke="#569cd6"/><path d="M25 248.9h1" stroke="#808080"/><path d="M18 250.9h2" stroke="#808080"/><path d="M20 250.9h8" stroke="#569cd6"/><path d="M28 250.9h1" stroke="#808080"/><path d="M18 252.9h1" stroke="#808080"/><path d="M19 252.9h8" stroke="#569cd6"/><path d="M28 252.9h5" stroke="#9cdcfe"/><path d="M33 252.9h1" stroke="#d4d4d4"/><path d="M34 252.9h81" stroke="#ce9178"/><path d="M115 252.9h1" stroke="#808080"/><path d="M20 254.9h1" stroke="#808080"/><path d="M21 254.9h3" stroke="#569cd6"/><path d="M25 254.9h5" stroke="#9cdcfe"/><path d="M30 254.9h1" stroke="#d4d4d4"/><path d="M31 254.9h11" stroke="#ce9178"/><path d="M42 254.9h1" stroke="#808080"/><path d="M22 256.9h1" stroke="#808080"/><path d="M23 256.9h1" stroke="#569cd6"/><path d="M25 256.9h5" stroke="#9cdcfe"/><path d="M30 256.9h1" stroke="#d4d4d4"/><path d="M31 256.9h9" stroke="#ce9178"/><path d="M41 256.9h7" stroke="#9cdcfe"/><path d="M48 256.9h1" stroke="#d4d4d4"/><path d="M49 256.9h34" stroke="#ce9178"/><path d="M84 256.9h6" stroke="#9cdcfe"/><path d="M90 256.9h1" stroke="#d4d4d4"/><path d="M91 256.9h8" stroke="#ce9178"/><path d="M99 256.9h1" stroke="#808080"/><path d="M24 258.9h1" stroke="#808080"/><path d="M25 258.9h3" stroke="#569cd6"/><path d="M29 258.9h6" stroke="#9cdcfe"/><path d="M35 258.9h1" stroke="#d4d4d4"/><path d="M36 258.9h36" stroke="#ce9178"/><path d="M73 258.9h3" stroke="#9cdcfe"/><path d="M76 258.9h1" stroke="#d4d4d4"/><path d="M77 258.9h8" stroke="#ce9178"/><path d="M86 258.9h2" stroke="#808080"/><path d="M24 260.9h1" stroke="#808080"/><path d="M25 260.9h3" stroke="#569cd6"/><path d="M29 260.9h5" stroke="#9cdcfe"/><path d="M34 260.9h1" stroke="#d4d4d4"/><path d="M35 260.9h8" stroke="#ce9178"/><path d="M43 260.9h1" stroke="#808080"/><path d="M24 262.9h1" stroke="#808080"/><path d="M25 262.9h3" stroke="#569cd6"/><path d="M29 262.9h5" stroke="#9cdcfe"/><path d="M34 262.9h1" stroke="#d4d4d4"/><path d="M35 262.9h6" stroke="#ce9178"/><path d="M42 262.9h7" stroke="#9cdcfe"/><path d="M49 262.9h1" stroke="#d4d4d4"/><path d="M50 262.9h15" stroke="#ce9178"/><path d="M66 262.9h5" stroke="#9cdcfe"/><path d="M71 262.9h1" stroke="#d4d4d4"/><path d="M72 262.9h4" stroke="#ce9178"/><path d="M77 262.9h6" stroke="#9cdcfe"/><path d="M83 262.9h1" stroke="#d4d4d4"/><path d="M84 262.9h4" stroke="#ce9178"/><path d="M88 262.9h1" stroke="#808080"/><path d="M26 264.9h1" stroke="#808080"/><path d="M27 264.9h4" stroke="#569cd6"/><path d="M32 264.9h1" stroke="#9cdcfe"/><path d="M33 264.9h1" stroke="#d4d4d4"/><path d="M34 264.9h49" stroke="#ce9178"/><path d="M83 264.9h1" stroke="#808080"/><path d="M84 264.9h2" stroke="#808080"/><path d="M86 264.9h4" stroke="#569cd6"/><path d="M90 264.9h1" stroke="#808080"/><path d="M24 266.9h2" stroke="#808080"/><path d="M26 266.9h3" stroke="#569cd6"/><path d="M29 266.9h1" stroke="#808080"/><path d="M24 268.9h1" stroke="#808080"/><path d="M25 268.9h4" stroke="#569cd6"/><path d="M30 268.9h7" stroke="#9cdcfe"/><path d="M37 268.9h1" stroke="#d4d4d4"/><path d="M38 268.9h34" stroke="#ce9178"/><path d="M72 268.9h1" stroke="#808080"/><path d="M73 268.9h2" stroke="#808080"/><path d="M75 268.9h4" stroke="#569cd6"/><path d="M79 268.9h1" stroke="#808080"/><path d="M22 270.9h2" stroke="#808080"/><path d="M24 270.9h1" stroke="#569cd6"/><path d="M25 270.9h1" stroke="#808080"/><path d="M20 272.9h2" stroke="#808080"/><path d="M22 272.9h3" stroke="#569cd6"/><path d="M25 272.9h1" stroke="#808080"/><path d="M18 274.9h2" stroke="#808080"/><path d="M20 274.9h8" stroke="#569cd6"/><path d="M28 274.9h1" stroke="#808080"/><path d="M18 276.9h1" stroke="#808080"/><path d="M19 276.9h8" stroke="#569cd6"/><path d="M28 276.9h5" stroke="#9cdcfe"/><path d="M33 276.9h1" stroke="#d4d4d4"/><path d="M34 276.9h83" stroke="#ce9178"/><path d="M20 278.9h1" stroke="#808080"/><path d="M21 278.9h3" stroke="#569cd6"/><path d="M25 278.9h5" stroke="#9cdcfe"/><path d="M30 278.9h1" stroke="#d4d4d4"/><path d="M31 278.9h12" stroke="#ce9178"/><path d="M43 278.9h1" stroke="#808080"/><path d="M22 280.9h1" stroke="#808080"/><path d="M23 280.9h1" stroke="#569cd6"/><path d="M25 280.9h5" stroke="#9cdcfe"/><path d="M30 280.9h1" stroke="#d4d4d4"/><path d="M31 280.9h9" stroke="#ce9178"/><path d="M41 280.9h7" stroke="#9cdcfe"/><path d="M48 280.9h1" stroke="#d4d4d4"/><path d="M49 280.9h35" stroke="#ce9178"/><path d="M85 280.9h6" stroke="#9cdcfe"/><path d="M91 280.9h1" stroke="#d4d4d4"/><path d="M92 280.9h8" stroke="#ce9178"/><path d="M100 280.9h1" stroke="#808080"/><path d="M24 282.9h1" stroke="#808080"/><path d="M25 282.9h3" stroke="#569cd6"/><path d="M29 282.9h5" stroke="#9cdcfe"/><path d="M34 282.9h1" stroke="#d4d4d4"/><path d="M35 282.9h6" stroke="#ce9178"/><path d="M42 282.9h7" stroke="#9cdcfe"/><path d="M49 282.9h1" stroke="#d4d4d4"/><path d="M50 282.9h15" stroke="#ce9178"/><path d="M66 282.9h5" stroke="#9cdcfe"/><path d="M71 282.9h1" stroke="#d4d4d4"/><path d="M72 282.9h4" stroke="#ce9178"/><path d="M77 282.9h6" stroke="#9cdcfe"/><path d="M83 282.9h1" stroke="#d4d4d4"/><path d="M84 282.9h4" stroke="#ce9178"/><path d="M88 282.9h1" stroke="#808080"/><path d="M26 284.9h1" stroke="#808080"/><path d="M27 284.9h4" stroke="#569cd6"/><path d="M32 284.9h1" stroke="#9cdcfe"/><path d="M33 284.9h1" stroke="#d4d4d4"/><path d="M34 284.9h49" stroke="#ce9178"/><path d="M83 284.9h1" stroke="#808080"/><path d="M84 284.9h2" stroke="#808080"/><path d="M86 284.9h4" stroke="#569cd6"/><path d="M90 284.9h1" stroke="#808080"/><path d="M24 286.9h2" stroke="#808080"/><path d="M26 286.9h3" stroke="#569cd6"/><path d="M29 286.9h1" stroke="#808080"/><path d="M24 288.9h1" stroke="#808080"/><path d="M25 288.9h4" stroke="#569cd6"/><path d="M30 288.9h7" stroke="#9cdcfe"/><path d="M37 288.9h1" stroke="#d4d4d4"/><path d="M38 288.9h35" stroke="#ce9178"/><path d="M73 288.9h1" stroke="#808080"/><path d="M74 288.9h2" stroke="#808080"/><path d="M76 288.9h4" stroke="#569cd6"/><path d="M80 288.9h1" stroke="#808080"/><path d="M22 290.9h2" stroke="#808080"/><path d="M24 290.9h1" stroke="#569cd6"/><path d="M25 290.9h1" stroke="#808080"/><path d="M20 292.9h2" stroke="#808080"/><path d="M22 292.9h3" stroke="#569cd6"/><path d="M25 292.9h1" stroke="#808080"/><path d="M18 294.9h2" stroke="#808080"/><path d="M20 294.9h8" stroke="#569cd6"/><path d="M28 294.9h1" stroke="#808080"/><path d="M18 296.9h1" stroke="#808080"/><path d="M19 296.9h8" stroke="#569cd6"/><path d="M28 296.9h5" stroke="#9cdcfe"/><path d="M33 296.9h1" stroke="#d4d4d4"/><path d="M34 296.9h83" stroke="#ce9178"/><path d="M20 298.9h1" stroke="#808080"/><path d="M21 298.9h3" stroke="#569cd6"/><path d="M25 298.9h5" stroke="#9cdcfe"/><path d="M30 298.9h1" stroke="#d4d4d4"/><path d="M31 298.9h15" stroke="#ce9178"/><path d="M46 298.9h1" stroke="#808080"/><path d="M22 300.9h1" stroke="#808080"/><path d="M23 300.9h1" stroke="#569cd6"/><path d="M25 300.9h5" stroke="#9cdcfe"/><path d="M30 300.9h1" stroke="#d4d4d4"/><path d="M31 300.9h9" stroke="#ce9178"/><path d="M41 300.9h7" stroke="#9cdcfe"/><path d="M48 300.9h1" stroke="#d4d4d4"/><path d="M49 300.9h38" stroke="#ce9178"/><path d="M88 300.9h6" stroke="#9cdcfe"/><path d="M94 300.9h1" stroke="#d4d4d4"/><path d="M95 300.9h8" stroke="#ce9178"/><path d="M103 300.9h1" stroke="#808080"/><path d="M24 302.9h1" stroke="#808080"/><path d="M25 302.9h3" stroke="#569cd6"/><path d="M29 302.9h6" stroke="#9cdcfe"/><path d="M35 302.9h1" stroke="#d4d4d4"/><path d="M36 302.9h40" stroke="#ce9178"/><path d="M77 302.9h3" stroke="#9cdcfe"/><path d="M80 302.9h1" stroke="#d4d4d4"/><path d="M81 302.9h8" stroke="#ce9178"/><path d="M90 302.9h2" stroke="#808080"/><path d="M24 304.9h1" stroke="#808080"/><path d="M25 304.9h3" stroke="#569cd6"/><path d="M29 304.9h5" stroke="#9cdcfe"/><path d="M34 304.9h1" stroke="#d4d4d4"/><path d="M35 304.9h8" stroke="#ce9178"/><path d="M43 304.9h1" stroke="#808080"/><path d="M24 306.9h1" stroke="#808080"/><path d="M25 306.9h3" stroke="#569cd6"/><path d="M29 306.9h5" stroke="#9cdcfe"/><path d="M34 306.9h1" stroke="#d4d4d4"/><path d="M35 306.9h6" stroke="#ce9178"/><path d="M42 306.9h7" stroke="#9cdcfe"/><path d="M49 306.9h1" stroke="#d4d4d4"/><path d="M50 306.9h15" stroke="#ce9178"/><path d="M66 306.9h5" stroke="#9cdcfe"/><path d="M71 306.9h1" stroke="#d4d4d4"/><path d="M72 306.9h4" stroke="#ce9178"/><path d="M77 306.9h6" stroke="#9cdcfe"/><path d="M83 306.9h1" stroke="#d4d4d4"/><path d="M84 306.9h4" stroke="#ce9178"/><path d="M88 306.9h1" stroke="#808080"/><path d="M26 308.9h1" stroke="#808080"/><path d="M27 308.9h4" stroke="#569cd6"/><path d="M32 308.9h1" stroke="#9cdcfe"/><path d="M33 308.9h1" stroke="#d4d4d4"/><path d="M34 308.9h49" stroke="#ce9178"/><path d="M83 308.9h1" stroke="#808080"/><path d="M84 308.9h2" stroke="#808080"/><path d="M86 308.9h4" stroke="#569cd6"/><path d="M90 308.9h1" stroke="#808080"/><path d="M24 310.9h2" stroke="#808080"/><path d="M26 310.9h3" stroke="#569cd6"/><path d="M29 310.9h1" stroke="#808080"/><path d="M24 312.9h1" stroke="#808080"/><path d="M25 312.9h4" stroke="#569cd6"/><path d="M30 312.9h7" stroke="#9cdcfe"/><path d="M37 312.9h1" stroke="#d4d4d4"/><path d="M38 312.9h38" stroke="#ce9178"/><path d="M76 312.9h1" stroke="#808080"/><path d="M77 312.9h2" stroke="#808080"/><path d="M79 312.9h4" stroke="#569cd6"/><path d="M83 312.9h1" stroke="#808080"/><path d="M22 314.9h2" stroke="#808080"/><path d="M24 314.9h1" stroke="#569cd6"/><path d="M25 314.9h1" stroke="#808080"/><path d="M20 316.9h2" stroke="#808080"/><path d="M22 316.9h3" stroke="#569cd6"/><path d="M25 316.9h1" stroke="#808080"/><path d="M18 318.9h2" stroke="#808080"/><path d="M20 318.9h8" stroke="#569cd6"/><path d="M28 318.9h1" stroke="#808080"/><path d="M18 320.9h1" stroke="#808080"/><path d="M19 320.9h8" stroke="#569cd6"/><path d="M28 320.9h5" stroke="#9cdcfe"/><path d="M33 320.9h1" stroke="#d4d4d4"/><path d="M34 320.9h83" stroke="#ce9178"/><path d="M20 322.9h1" stroke="#808080"/><path d="M21 322.9h3" stroke="#569cd6"/><path d="M25 322.9h5" stroke="#9cdcfe"/><path d="M30 322.9h1" stroke="#d4d4d4"/><path d="M31 322.9h12" stroke="#ce9178"/><path d="M43 322.9h1" stroke="#808080"/><path d="M22 324.9h1" stroke="#808080"/><path d="M23 324.9h1" stroke="#569cd6"/><path d="M25 324.9h5" stroke="#9cdcfe"/><path d="M30 324.9h1" stroke="#d4d4d4"/><path d="M31 324.9h9" stroke="#ce9178"/><path d="M41 324.9h7" stroke="#9cdcfe"/><path d="M48 324.9h1" stroke="#d4d4d4"/><path d="M49 324.9h35" stroke="#ce9178"/><path d="M85 324.9h6" stroke="#9cdcfe"/><path d="M91 324.9h1" stroke="#d4d4d4"/><path d="M92 324.9h8" stroke="#ce9178"/><path d="M100 324.9h1" stroke="#808080"/><path d="M24 326.9h1" stroke="#808080"/><path d="M25 326.9h3" stroke="#569cd6"/><path d="M29 326.9h5" stroke="#9cdcfe"/><path d="M34 326.9h1" stroke="#d4d4d4"/><path d="M35 326.9h6" stroke="#ce9178"/><path d="M42 326.9h7" stroke="#9cdcfe"/><path d="M49 326.9h1" stroke="#d4d4d4"/><path d="M50 326.9h15" stroke="#ce9178"/><path d="M66 326.9h5" stroke="#9cdcfe"/><path d="M71 326.9h1" stroke="#d4d4d4"/><path d="M72 326.9h4" stroke="#ce9178"/><path d="M77 326.9h6" stroke="#9cdcfe"/><path d="M83 326.9h1" stroke="#d4d4d4"/><path d="M84 326.9h4" stroke="#ce9178"/><path d="M88 326.9h1" stroke="#808080"/><path d="M26 328.9h1" stroke="#808080"/><path d="M27 328.9h4" stroke="#569cd6"/><path d="M32 328.9h1" stroke="#9cdcfe"/><path d="M33 328.9h1" stroke="#d4d4d4"/><path d="M34 328.9h49" stroke="#ce9178"/><path d="M83 328.9h1" stroke="#808080"/><path d="M84 328.9h2" stroke="#808080"/><path d="M86 328.9h4" stroke="#569cd6"/><path d="M90 328.9h1" stroke="#808080"/><path d="M24 330.9h2" stroke="#808080"/><path d="M26 330.9h3" stroke="#569cd6"/><path d="M29 330.9h1" stroke="#808080"/><path d="M24 332.9h1" stroke="#808080"/><path d="M25 332.9h4" stroke="#569cd6"/><path d="M30 332.9h7" stroke="#9cdcfe"/><path d="M37 332.9h1" stroke="#d4d4d4"/><path d="M38 332.9h35" stroke="#ce9178"/><path d="M73 332.9h1" stroke="#808080"/><path d="M74 332.9h2" stroke="#808080"/><path d="M76 332.9h4" stroke="#569cd6"/><path d="M80 332.9h1" stroke="#808080"/><path d="M22 334.9h2" stroke="#808080"/><path d="M24 334.9h1" stroke="#569cd6"/><path d="M25 334.9h1" stroke="#808080"/><path d="M20 336.9h2" stroke="#808080"/><path d="M22 336.9h3" stroke="#569cd6"/><path d="M25 336.9h1" stroke="#808080"/><path d="M18 338.9h2" stroke="#808080"/><path d="M20 338.9h8" stroke="#569cd6"/><path d="M28 338.9h1" stroke="#808080"/><path d="M18 340.9h1" stroke="#808080"/><path d="M19 340.9h8" stroke="#569cd6"/><path d="M28 340.9h5" stroke="#9cdcfe"/><path d="M33 340.9h1" stroke="#d4d4d4"/><path d="M34 340.9h83" stroke="#ce9178"/><path d="M20 342.9h1" stroke="#808080"/><path d="M21 342.9h3" stroke="#569cd6"/><path d="M25 342.9h5" stroke="#9cdcfe"/><path d="M30 342.9h1" stroke="#d4d4d4"/><path d="M31 342.9h15" stroke="#ce9178"/><path d="M46 342.9h1" stroke="#808080"/><path d="M22 344.9h1" stroke="#808080"/><path d="M23 344.9h1" stroke="#569cd6"/><path d="M25 344.9h5" stroke="#9cdcfe"/><path d="M30 344.9h1" stroke="#d4d4d4"/><path d="M31 344.9h9" stroke="#ce9178"/><path d="M41 344.9h7" stroke="#9cdcfe"/><path d="M48 344.9h1" stroke="#d4d4d4"/><path d="M49 344.9h38" stroke="#ce9178"/><path d="M88 344.9h6" stroke="#9cdcfe"/><path d="M94 344.9h1" stroke="#d4d4d4"/><path d="M95 344.9h8" stroke="#ce9178"/><path d="M103 344.9h1" stroke="#808080"/><path d="M24 346.9h1" stroke="#808080"/><path d="M25 346.9h3" stroke="#569cd6"/><path d="M29 346.9h6" stroke="#9cdcfe"/><path d="M35 346.9h1" stroke="#d4d4d4"/><path d="M36 346.9h40" stroke="#ce9178"/><path d="M77 346.9h3" stroke="#9cdcfe"/><path d="M80 346.9h1" stroke="#d4d4d4"/><path d="M81 346.9h8" stroke="#ce9178"/><path d="M90 346.9h2" stroke="#808080"/><path d="M24 348.9h1" stroke="#808080"/><path d="M25 348.9h3" stroke="#569cd6"/><path d="M29 348.9h5" stroke="#9cdcfe"/><path d="M34 348.9h1" stroke="#d4d4d4"/><path d="M35 348.9h8" stroke="#ce9178"/><path d="M43 348.9h1" stroke="#808080"/><path d="M24 350.9h1" stroke="#808080"/><path d="M25 350.9h3" stroke="#569cd6"/><path d="M29 350.9h5" stroke="#9cdcfe"/><path d="M34 350.9h1" stroke="#d4d4d4"/><path d="M35 350.9h6" stroke="#ce9178"/><path d="M42 350.9h7" stroke="#9cdcfe"/><path d="M49 350.9h1" stroke="#d4d4d4"/><path d="M50 350.9h15" stroke="#ce9178"/><path d="M66 350.9h5" stroke="#9cdcfe"/><path d="M71 350.9h1" stroke="#d4d4d4"/><path d="M72 350.9h4" stroke="#ce9178"/><path d="M77 350.9h6" stroke="#9cdcfe"/><path d="M83 350.9h1" stroke="#d4d4d4"/><path d="M84 350.9h4" stroke="#ce9178"/><path d="M88 350.9h1" stroke="#808080"/><path d="M26 352.9h1" stroke="#808080"/><path d="M27 352.9h4" stroke="#569cd6"/><path d="M32 352.9h1" stroke="#9cdcfe"/><path d="M33 352.9h1" stroke="#d4d4d4"/><path d="M34 352.9h49" stroke="#ce9178"/><path d="M83 352.9h1" stroke="#808080"/><path d="M84 352.9h2" stroke="#808080"/><path d="M86 352.9h4" stroke="#569cd6"/><path d="M90 352.9h1" stroke="#808080"/><path d="M24 354.9h2" stroke="#808080"/><path d="M26 354.9h3" stroke="#569cd6"/><path d="M29 354.9h1" stroke="#808080"/><path d="M24 356.9h1" stroke="#808080"/><path d="M25 356.9h4" stroke="#569cd6"/><path d="M30 356.9h7" stroke="#9cdcfe"/><path d="M37 356.9h1" stroke="#d4d4d4"/><path d="M38 356.9h38" stroke="#ce9178"/><path d="M76 356.9h1" stroke="#808080"/><path d="M77 356.9h2" stroke="#808080"/><path d="M79 356.9h4" stroke="#569cd6"/><path d="M83 356.9h1" stroke="#808080"/><path d="M22 358.9h2" stroke="#808080"/><path d="M24 358.9h1" stroke="#569cd6"/><path d="M25 358.9h1" stroke="#808080"/><path d="M20 360.9h2" stroke="#808080"/><path d="M22 360.9h3" stroke="#569cd6"/><path d="M25 360.9h1" stroke="#808080"/><path d="M18 362.9h2" stroke="#808080"/><path d="M20 362.9h8" stroke="#569cd6"/><path d="M28 362.9h1" stroke="#808080"/><path d="M18 364.9h1" stroke="#808080"/><path d="M19 364.9h8" stroke="#569cd6"/><path d="M28 364.9h5" stroke="#9cdcfe"/><path d="M33 364.9h1" stroke="#d4d4d4"/><path d="M34 364.9h83" stroke="#ce9178"/><path d="M20 366.9h1" stroke="#808080"/><path d="M21 366.9h3" stroke="#569cd6"/><path d="M25 366.9h5" stroke="#9cdcfe"/><path d="M30 366.9h1" stroke="#d4d4d4"/><path d="M31 366.9h14" stroke="#ce9178"/><path d="M45 366.9h1" stroke="#808080"/><path d="M22 368.9h1" stroke="#808080"/><path d="M23 368.9h1" stroke="#569cd6"/><path d="M25 368.9h5" stroke="#9cdcfe"/><path d="M30 368.9h1" stroke="#d4d4d4"/><path d="M31 368.9h9" stroke="#ce9178"/><path d="M41 368.9h7" stroke="#9cdcfe"/><path d="M48 368.9h1" stroke="#d4d4d4"/><path d="M49 368.9h37" stroke="#ce9178"/><path d="M87 368.9h6" stroke="#9cdcfe"/><path d="M93 368.9h1" stroke="#d4d4d4"/><path d="M94 368.9h8" stroke="#ce9178"/><path d="M102 368.9h1" stroke="#808080"/><path d="M24 370.9h1" stroke="#808080"/><path d="M25 370.9h3" stroke="#569cd6"/><path d="M29 370.9h5" stroke="#9cdcfe"/><path d="M34 370.9h1" stroke="#d4d4d4"/><path d="M35 370.9h6" stroke="#ce9178"/><path d="M42 370.9h7" stroke="#9cdcfe"/><path d="M49 370.9h1" stroke="#d4d4d4"/><path d="M50 370.9h15" stroke="#ce9178"/><path d="M66 370.9h5" stroke="#9cdcfe"/><path d="M71 370.9h1" stroke="#d4d4d4"/><path d="M72 370.9h4" stroke="#ce9178"/><path d="M77 370.9h6" stroke="#9cdcfe"/><path d="M83 370.9h1" stroke="#d4d4d4"/><path d="M84 370.9h4" stroke="#ce9178"/><path d="M88 370.9h1" stroke="#808080"/><path d="M26 372.9h1" stroke="#808080"/><path d="M27 372.9h4" stroke="#569cd6"/><path d="M32 372.9h1" stroke="#9cdcfe"/><path d="M33 372.9h1" stroke="#d4d4d4"/><path d="M34 372.9h49" stroke="#ce9178"/><path d="M83 372.9h1" stroke="#808080"/><path d="M84 372.9h2" stroke="#808080"/><path d="M86 372.9h4" stroke="#569cd6"/><path d="M90 372.9h1" stroke="#808080"/><path d="M24 374.9h2" stroke="#808080"/><path d="M26 374.9h3" stroke="#569cd6"/><path d="M29 374.9h1" stroke="#808080"/><path d="M24 376.9h1" stroke="#808080"/><path d="M25 376.9h4" stroke="#569cd6"/><path d="M30 376.9h7" stroke="#9cdcfe"/><path d="M37 376.9h1" stroke="#d4d4d4"/><path d="M38 376.9h37" stroke="#ce9178"/><path d="M75 376.9h1" stroke="#808080"/><path d="M76 376.9h2" stroke="#808080"/><path d="M78 376.9h4" stroke="#569cd6"/><path d="M82 376.9h1" stroke="#808080"/><path d="M22 378.9h2" stroke="#808080"/><path d="M24 378.9h1" stroke="#569cd6"/><path d="M25 378.9h1" stroke="#808080"/><path d="M20 380.9h2" stroke="#808080"/><path d="M22 380.9h3" stroke="#569cd6"/><path d="M25 380.9h1" stroke="#808080"/><path d="M18 382.9h2" stroke="#808080"/><path d="M20 382.9h8" stroke="#569cd6"/><path d="M28 382.9h1" stroke="#808080"/><path d="M18 384.9h1" stroke="#808080"/><path d="M19 384.9h8" stroke="#569cd6"/><path d="M28 384.9h5" stroke="#9cdcfe"/><path d="M33 384.9h1" stroke="#d4d4d4"/><path d="M34 384.9h83" stroke="#ce9178"/><path d="M20 386.9h1" stroke="#808080"/><path d="M21 386.9h3" stroke="#569cd6"/><path d="M25 386.9h5" stroke="#9cdcfe"/><path d="M30 386.9h1" stroke="#d4d4d4"/><path d="M31 386.9h13" stroke="#ce9178"/><path d="M44 386.9h1" stroke="#808080"/><path d="M22 388.9h1" stroke="#808080"/><path d="M23 388.9h1" stroke="#569cd6"/><path d="M25 388.9h5" stroke="#9cdcfe"/><path d="M30 388.9h1" stroke="#d4d4d4"/><path d="M31 388.9h9" stroke="#ce9178"/><path d="M41 388.9h7" stroke="#9cdcfe"/><path d="M48 388.9h1" stroke="#d4d4d4"/><path d="M49 388.9h36" stroke="#ce9178"/><path d="M86 388.9h6" stroke="#9cdcfe"/><path d="M92 388.9h1" stroke="#d4d4d4"/><path d="M93 388.9h8" stroke="#ce9178"/><path d="M101 388.9h1" stroke="#808080"/><path d="M24 390.9h1" stroke="#808080"/><path d="M25 390.9h3" stroke="#569cd6"/><path d="M29 390.9h6" stroke="#9cdcfe"/><path d="M35 390.9h1" stroke="#d4d4d4"/><path d="M36 390.9h38" stroke="#ce9178"/><path d="M75 390.9h3" stroke="#9cdcfe"/><path d="M78 390.9h1" stroke="#d4d4d4"/><path d="M79 390.9h8" stroke="#ce9178"/><path d="M88 390.9h2" stroke="#808080"/><path d="M24 392.9h1" stroke="#808080"/><path d="M25 392.9h3" stroke="#569cd6"/><path d="M29 392.9h5" stroke="#9cdcfe"/><path d="M34 392.9h1" stroke="#d4d4d4"/><path d="M35 392.9h8" stroke="#ce9178"/><path d="M43 392.9h1" stroke="#808080"/><path d="M24 394.9h1" stroke="#808080"/><path d="M25 394.9h3" stroke="#569cd6"/><path d="M29 394.9h5" stroke="#9cdcfe"/><path d="M34 394.9h1" stroke="#d4d4d4"/><path d="M35 394.9h6" stroke="#ce9178"/><path d="M42 394.9h7" stroke="#9cdcfe"/><path d="M49 394.9h1" stroke="#d4d4d4"/><path d="M50 394.9h15" stroke="#ce9178"/><path d="M66 394.9h5" stroke="#9cdcfe"/><path d="M71 394.9h1" stroke="#d4d4d4"/><path d="M72 394.9h4" stroke="#ce9178"/><path d="M77 394.9h6" stroke="#9cdcfe"/><path d="M83 394.9h1" stroke="#d4d4d4"/><path d="M84 394.9h4" stroke="#ce9178"/><path d="M88 394.9h1" stroke="#808080"/><path d="M26 396.9h1" stroke="#808080"/><path d="M27 396.9h4" stroke="#569cd6"/><path d="M32 396.9h1" stroke="#9cdcfe"/><path d="M33 396.9h1" stroke="#d4d4d4"/><path d="M34 396.9h49" stroke="#ce9178"/><path d="M83 396.9h1" stroke="#808080"/><path d="M84 396.9h2" stroke="#808080"/><path d="M86 396.9h4" stroke="#569cd6"/><path d="M90 396.9h1" stroke="#808080"/><path d="M24 398.9h2" stroke="#808080"/><path d="M26 398.9h3" stroke="#569cd6"/><path d="M29 398.9h1" stroke="#808080"/><path d="M24 400.9h1" stroke="#808080"/><path d="M25 400.9h4" stroke="#569cd6"/><path d="M30 400.9h7" stroke="#9cdcfe"/><path d="M37 400.9h1" stroke="#d4d4d4"/><path d="M38 400.9h36" stroke="#ce9178"/><path d="M74 400.9h1" stroke="#808080"/><path d="M75 400.9h2" stroke="#808080"/><path d="M77 400.9h4" stroke="#569cd6"/><path d="M81 400.9h1" stroke="#808080"/><path d="M22 402.9h2" stroke="#808080"/><path d="M24 402.9h1" stroke="#569cd6"/><path d="M25 402.9h1" stroke="#808080"/><path d="M20 404.9h2" stroke="#808080"/><path d="M22 404.9h3" stroke="#569cd6"/><path d="M25 404.9h1" stroke="#808080"/><path d="M18 406.9h2" stroke="#808080"/><path d="M20 406.9h8" stroke="#569cd6"/><path d="M28 406.9h1" stroke="#808080"/><path d="M18 408.9h1" stroke="#808080"/><path d="M19 408.9h8" stroke="#569cd6"/><path d="M28 408.9h5" stroke="#9cdcfe"/><path d="M33 408.9h1" stroke="#d4d4d4"/><path d="M34 408.9h83" stroke="#ce9178"/><path d="M20 410.9h1" stroke="#808080"/><path d="M21 410.9h3" stroke="#569cd6"/><path d="M25 410.9h5" stroke="#9cdcfe"/><path d="M30 410.9h1" stroke="#d4d4d4"/><path d="M31 410.9h13" stroke="#ce9178"/><path d="M44 410.9h1" stroke="#808080"/><path d="M22 412.9h1" stroke="#808080"/><path d="M23 412.9h1" stroke="#569cd6"/><path d="M25 412.9h5" stroke="#9cdcfe"/><path d="M30 412.9h1" stroke="#d4d4d4"/><path d="M31 412.9h9" stroke="#ce9178"/><path d="M41 412.9h7" stroke="#9cdcfe"/><path d="M48 412.9h1" stroke="#d4d4d4"/><path d="M49 412.9h36" stroke="#ce9178"/><path d="M86 412.9h6" stroke="#9cdcfe"/><path d="M92 412.9h1" stroke="#d4d4d4"/><path d="M93 412.9h8" stroke="#ce9178"/><path d="M101 412.9h1" stroke="#808080"/><path d="M24 414.9h1" stroke="#808080"/><path d="M25 414.9h3" stroke="#569cd6"/><path d="M29 414.9h5" stroke="#9cdcfe"/><path d="M34 414.9h1" stroke="#d4d4d4"/><path d="M35 414.9h6" stroke="#ce9178"/><path d="M42 414.9h7" stroke="#9cdcfe"/><path d="M49 414.9h1" stroke="#d4d4d4"/><path d="M50 414.9h15" stroke="#ce9178"/><path d="M66 414.9h5" stroke="#9cdcfe"/><path d="M71 414.9h1" stroke="#d4d4d4"/><path d="M72 414.9h4" stroke="#ce9178"/><path d="M77 414.9h6" stroke="#9cdcfe"/><path d="M83 414.9h1" stroke="#d4d4d4"/><path d="M84 414.9h4" stroke="#ce9178"/><path d="M88 414.9h1" stroke="#808080"/><path d="M26 416.9h1" stroke="#808080"/><path d="M27 416.9h4" stroke="#569cd6"/><path d="M32 416.9h1" stroke="#9cdcfe"/><path d="M33 416.9h1" stroke="#d4d4d4"/><path d="M34 416.9h49" stroke="#ce9178"/><path d="M83 416.9h1" stroke="#808080"/><path d="M84 416.9h2" stroke="#808080"/><path d="M86 416.9h4" stroke="#569cd6"/><path d="M90 416.9h1" stroke="#808080"/><path d="M24 418.9h2" stroke="#808080"/><path d="M26 418.9h3" stroke="#569cd6"/><path d="M29 418.9h1" stroke="#808080"/><path d="M24 420.9h1" stroke="#808080"/><path d="M25 420.9h4" stroke="#569cd6"/><path d="M30 420.9h7" stroke="#9cdcfe"/><path d="M37 420.9h1" stroke="#d4d4d4"/><path d="M38 420.9h36" stroke="#ce9178"/><path d="M74 420.9h1" stroke="#808080"/><path d="M75 420.9h2" stroke="#808080"/><path d="M77 420.9h4" stroke="#569cd6"/><path d="M81 420.9h1" stroke="#808080"/><path d="M22 422.9h2" stroke="#808080"/><path d="M24 422.9h1" stroke="#569cd6"/><path d="M25 422.9h1" stroke="#808080"/><path d="M20 424.9h2" stroke="#808080"/><path d="M22 424.9h3" stroke="#569cd6"/><path d="M25 424.9h1" stroke="#808080"/><path d="M18 426.9h2" stroke="#808080"/><path d="M20 426.9h8" stroke="#569cd6"/><path d="M28 426.9h1" stroke="#808080"/><path d="M18 428.9h1" stroke="#808080"/><path d="M19 428.9h8" stroke="#569cd6"/><path d="M28 428.9h5" stroke="#9cdcfe"/><path d="M33 428.9h1" stroke="#d4d4d4"/><path d="M34 428.9h83" stroke="#ce9178"/><path d="M20 430.9h1" stroke="#808080"/><path d="M21 430.9h3" stroke="#569cd6"/><path d="M25 430.9h5" stroke="#9cdcfe"/><path d="M30 430.9h1" stroke="#d4d4d4"/><path d="M31 430.9h15" stroke="#ce9178"/><path d="M46 430.9h1" stroke="#808080"/><path d="M22 432.9h1" stroke="#808080"/><path d="M23 432.9h1" stroke="#569cd6"/><path d="M25 432.9h5" stroke="#9cdcfe"/><path d="M30 432.9h1" stroke="#d4d4d4"/><path d="M31 432.9h9" stroke="#ce9178"/><path d="M41 432.9h7" stroke="#9cdcfe"/><path d="M48 432.9h1" stroke="#d4d4d4"/><path d="M49 432.9h38" stroke="#ce9178"/><path d="M88 432.9h6" stroke="#9cdcfe"/><path d="M94 432.9h1" stroke="#d4d4d4"/><path d="M95 432.9h8" stroke="#ce9178"/><path d="M103 432.9h1" stroke="#808080"/><path d="M24 434.9h1" stroke="#808080"/><path d="M25 434.9h3" stroke="#569cd6"/><path d="M29 434.9h6" stroke="#9cdcfe"/><path d="M35 434.9h1" stroke="#d4d4d4"/><path d="M36 434.9h40" stroke="#ce9178"/><path d="M77 434.9h3" stroke="#9cdcfe"/><path d="M80 434.9h1" stroke="#d4d4d4"/><path d="M81 434.9h8" stroke="#ce9178"/><path d="M90 434.9h2" stroke="#808080"/><path d="M24 436.9h1" stroke="#808080"/><path d="M25 436.9h3" stroke="#569cd6"/><path d="M29 436.9h5" stroke="#9cdcfe"/><path d="M34 436.9h1" stroke="#d4d4d4"/><path d="M35 436.9h8" stroke="#ce9178"/><path d="M43 436.9h1" stroke="#808080"/><path d="M24 438.9h1" stroke="#808080"/><path d="M25 438.9h3" stroke="#569cd6"/><path d="M29 438.9h5" stroke="#9cdcfe"/><path d="M34 438.9h1" stroke="#d4d4d4"/><path d="M35 438.9h6" stroke="#ce9178"/><path d="M42 438.9h7" stroke="#9cdcfe"/><path d="M49 438.9h1" stroke="#d4d4d4"/><path d="M50 438.9h15" stroke="#ce9178"/><path d="M66 438.9h5" stroke="#9cdcfe"/><path d="M71 438.9h1" stroke="#d4d4d4"/><path d="M72 438.9h4" stroke="#ce9178"/><path d="M77 438.9h6" stroke="#9cdcfe"/><path d="M83 438.9h1" stroke="#d4d4d4"/><path d="M84 438.9h4" stroke="#ce9178"/><path d="M88 438.9h1" stroke="#808080"/><path d="M26 440.9h1" stroke="#808080"/><path d="M27 440.9h4" stroke="#569cd6"/><path d="M32 440.9h1" stroke="#9cdcfe"/><path d="M33 440.9h1" stroke="#d4d4d4"/><path d="M34 440.9h49" stroke="#ce9178"/><path d="M83 440.9h1" stroke="#808080"/><path d="M84 440.9h2" stroke="#808080"/><path d="M86 440.9h4" stroke="#569cd6"/><path d="M90 440.9h1" stroke="#808080"/><path d="M24 442.9h2" stroke="#808080"/><path d="M26 442.9h3" stroke="#569cd6"/><path d="M29 442.9h1" stroke="#808080"/><path d="M24 444.9h1" stroke="#808080"/><path d="M25 444.9h4" stroke="#569cd6"/><path d="M30 444.9h7" stroke="#9cdcfe"/><path d="M37 444.9h1" stroke="#d4d4d4"/><path d="M38 444.9h38" stroke="#ce9178"/><path d="M76 444.9h1" stroke="#808080"/><path d="M77 444.9h2" stroke="#808080"/><path d="M79 444.9h4" stroke="#569cd6"/><path d="M83 444.9h1" stroke="#808080"/><path d="M22 446.9h2" stroke="#808080"/><path d="M24 446.9h1" stroke="#569cd6"/><path d="M25 446.9h1" stroke="#808080"/><path d="M20 448.9h2" stroke="#808080"/><path d="M22 448.9h3" stroke="#569cd6"/><path d="M25 448.9h1" stroke="#808080"/><path d="M18 450.9h2" stroke="#808080"/><path d="M20 450.9h8" stroke="#569cd6"/><path d="M28 450.9h1" stroke="#808080"/><path d="M18 452.9h1" stroke="#808080"/><path d="M19 452.9h8" stroke="#569cd6"/><path d="M28 452.9h5" stroke="#9cdcfe"/><path d="M33 452.9h1" stroke="#d4d4d4"/><path d="M34 452.9h83" stroke="#ce9178"/><path d="M20 454.9h1" stroke="#808080"/><path d="M21 454.9h3" stroke="#569cd6"/><path d="M25 454.9h5" stroke="#9cdcfe"/><path d="M30 454.9h1" stroke="#d4d4d4"/><path d="M31 454.9h15" stroke="#ce9178"/><path d="M46 454.9h1" stroke="#808080"/><path d="M22 456.9h1" stroke="#808080"/><path d="M23 456.9h1" stroke="#569cd6"/><path d="M25 456.9h5" stroke="#9cdcfe"/><path d="M30 456.9h1" stroke="#d4d4d4"/><path d="M31 456.9h9" stroke="#ce9178"/><path d="M41 456.9h7" stroke="#9cdcfe"/><path d="M48 456.9h1" stroke="#d4d4d4"/><path d="M49 456.9h38" stroke="#ce9178"/><path d="M88 456.9h6" stroke="#9cdcfe"/><path d="M94 456.9h1" stroke="#d4d4d4"/><path d="M95 456.9h8" stroke="#ce9178"/><path d="M103 456.9h1" stroke="#808080"/><path d="M24 458.9h1" stroke="#808080"/><path d="M25 458.9h3" stroke="#569cd6"/><path d="M29 458.9h5" stroke="#9cdcfe"/><path d="M34 458.9h1" stroke="#d4d4d4"/><path d="M35 458.9h6" stroke="#ce9178"/><path d="M42 458.9h7" stroke="#9cdcfe"/><path d="M49 458.9h1" stroke="#d4d4d4"/><path d="M50 458.9h15" stroke="#ce9178"/><path d="M66 458.9h5" stroke="#9cdcfe"/><path d="M71 458.9h1" stroke="#d4d4d4"/><path d="M72 458.9h4" stroke="#ce9178"/><path d="M77 458.9h6" stroke="#9cdcfe"/><path d="M83 458.9h1" stroke="#d4d4d4"/><path d="M84 458.9h4" stroke="#ce9178"/><path d="M88 458.9h1" stroke="#808080"/><path d="M26 460.9h1" stroke="#808080"/><path d="M27 460.9h4" stroke="#569cd6"/><path d="M32 460.9h1" stroke="#9cdcfe"/><path d="M33 460.9h1" stroke="#d4d4d4"/><path d="M34 460.9h49" stroke="#ce9178"/><path d="M83 460.9h1" stroke="#808080"/><path d="M84 460.9h2" stroke="#808080"/><path d="M86 460.9h4" stroke="#569cd6"/><path d="M90 460.9h1" stroke="#808080"/><path d="M24 462.9h2" stroke="#808080"/><path d="M26 462.9h3" stroke="#569cd6"/><path d="M29 462.9h1" stroke="#808080"/><path d="M24 464.9h1" stroke="#808080"/><path d="M25 464.9h4" stroke="#569cd6"/><path d="M30 464.9h7" stroke="#9cdcfe"/><path d="M37 464.9h1" stroke="#d4d4d4"/><path d="M38 464.9h38" stroke="#ce9178"/><path d="M76 464.9h1" stroke="#808080"/><path d="M77 464.9h2" stroke="#808080"/><path d="M79 464.9h4" stroke="#569cd6"/><path d="M83 464.9h1" stroke="#808080"/><path d="M22 466.9h2" stroke="#808080"/><path d="M24 466.9h1" stroke="#569cd6"/><path d="M25 466.9h1" stroke="#808080"/><path d="M20 468.9h2" stroke="#808080"/><path d="M22 468.9h3" stroke="#569cd6"/><path d="M25 468.9h1" stroke="#808080"/><path d="M18 470.9h2" stroke="#808080"/><path d="M20 470.9h8" stroke="#569cd6"/><path d="M28 470.9h1" stroke="#808080"/><path d="M16 472.9h2" stroke="#808080"/><path d="M18 472.9h3" stroke="#569cd6"/><path d="M21 472.9h1" stroke="#808080"/><path d="M14 474.9h2" stroke="#808080"/><path d="M16 474.9h3" stroke="#569cd6"/><path d="M19 474.9h1" stroke="#808080"/><path d="M12 476.9h2" stroke="#808080"/><path d="M14 476.9h6" stroke="#569cd6"/><path d="M20 476.9h1" stroke="#808080"/><path d="M12 478.9h1" stroke="#808080"/><path d="M13 478.9h6" stroke="#569cd6"/><path d="M20 478.9h9" stroke="#9cdcfe"/><path d="M29 478.9h1" stroke="#d4d4d4"/><path d="M30 478.9h12" stroke="#ce9178"/><path d="M42 478.9h1" stroke="#808080"/><path d="M14 480.9h91" stroke="#d4d4d4"/><path d="M12 482.9h2" stroke="#808080"/><path d="M14 482.9h6" stroke="#569cd6"/><path d="M20 482.9h1" stroke="#808080"/><path d="M10 484.9h2" stroke="#808080"/><path d="M12 484.9h8" stroke="#569cd6"/><path d="M20 484.9h1" stroke="#808080"/><path d="M8 486.9h2" stroke="#808080"/><path d="M10 486.9h4" stroke="#569cd6"/><path d="M14 486.9h1" stroke="#808080"/></g></svg>
<div class="a" style="left:2385px;top:175px;width:3px;height:1297px;background:#161616"></div>
<div class="a" style="left:2506.5px;top:175px;width:1.5px;height:1297px;background:#383838"></div>
<div class="a" style="left:2507px;top:174px;width:24px;height:168px;background:rgba(121,121,121,0.4)"></div>
<div class="a" style="left:2507px;top:633px;width:3px;height:16px;background:#c8901a"></div>
<div class="a" style="left:0;top:1472px;width:33px;height:38px;background:#16825d"></div>
<svg style="left:0px;top:1479px" width="30" height="28" viewBox="0 0 30 28"><path d="M10.8 1.5 L2.6 9.2 L10.8 16.8" fill="none" stroke="#ffffff" stroke-width="2"/><path d="M-3 14 L1.5 18.5" stroke="#ffffff" stroke-width="2"/></svg>
<svg style="left:47px;top:1479px" width="27" height="26" viewBox="0 0 27 26"><circle cx="12.5" cy="13" r="10.5" fill="none" stroke="#ffffff" stroke-width="2"/><path d="M8 8.5 L17 17.5 M17 8.5 L8 17.5" stroke="#ffffff" stroke-width="2"/></svg>
<div class="t" style="left:78.5px;top:1482px;font-size:21.9px;color:#fff">0</div>
<svg style="left:97px;top:1478px" width="26" height="26" viewBox="0 0 26 26"><path d="M12.5 2.5 L23 22 H2 Z" fill="none" stroke="#ffffff" stroke-width="2" stroke-linejoin="round"/><path d="M12.5 9 V15.5" stroke="#ffffff" stroke-width="2"/><circle cx="12.5" cy="18.5" r="1.3" fill="#fff"/></svg>
<div class="t" style="left:128px;top:1482px;font-size:21.9px;color:#fff">0</div>
<div class="a" style="left:1863px;top:1472px;width:62px;height:38px;background:#0a4a7a"></div>
<svg style="left:1880px;top:1479px" width="28" height="28" viewBox="0 0 28 28"><circle cx="11.5" cy="11" r="9" fill="none" stroke="#fff" stroke-width="2.2"/><path d="M7 11 H16 M18 17.5 L25 24.5" stroke="#fff" stroke-width="2.2"/></svg>
<div class="t" style="left:1938.5px;top:1481.5px;font-size:21.9px;color:#fff">行 1，列 1</div>
<div class="t" style="left:2069.5px;top:1481.5px;font-size:21.9px;color:#fff">空格: 2</div>
<div class="t" style="left:2165px;top:1481.5px;font-size:21.9px;color:#fff">UTF-8</div>
<div class="t" style="left:2252px;top:1481.5px;font-size:21.9px;color:#fff">LF</div>
<div class="t" style="left:2338px;top:1481.5px;font-size:21.9px;color:#fff">HTML</div>
<div class="t" style="left:2304px;top:1479px;font-size:21.9px;color:#fff">{ }</div>
<svg style="left:2424.5px;top:1478px" width="28" height="25" viewBox="0 0 28 25"><g transform="scale(0.73)"><path d="M0.3 22 C0.3 16 4 13.7 8 13.7 H28 C32 13.7 36 16 36 22 C36 28 28 32 18 32 C8 32 0.3 28 0.3 22 Z" fill="#ffffff"/><path d="M7.6 16.1 H29 V25 C26 27.6 22 27.8 18.3 27.8 C14 27.8 10 27.4 7.6 25 Z" fill="#007acc"/><circle cx="11.1" cy="8.4" r="5.6" fill="#007acc" stroke="#ffffff" stroke-width="3.8"/><circle cx="25.3" cy="8.4" r="5.6" fill="#007acc" stroke="#ffffff" stroke-width="3.8"/><rect x="12.4" y="18.6" width="3.6" height="6.6" rx="1.8" fill="#ffffff"/><rect x="20" y="18.6" width="3.6" height="6.6" rx="1.8" fill="#ffffff"/></g></svg>
<svg style="left:2480px;top:1476px" width="26" height="30" viewBox="0 0 26 30"><path d="M4 21 Q6 18 6 14 V11 Q6 4 13 4 Q20 4 20 11 V14 Q20 18 22 21 Z" fill="none" stroke="#fff" stroke-width="2" stroke-linejoin="round"/><path d="M10 24.5 Q13 27.5 16 24.5" fill="none" stroke="#fff" stroke-width="2"/></svg>
</body></html>
